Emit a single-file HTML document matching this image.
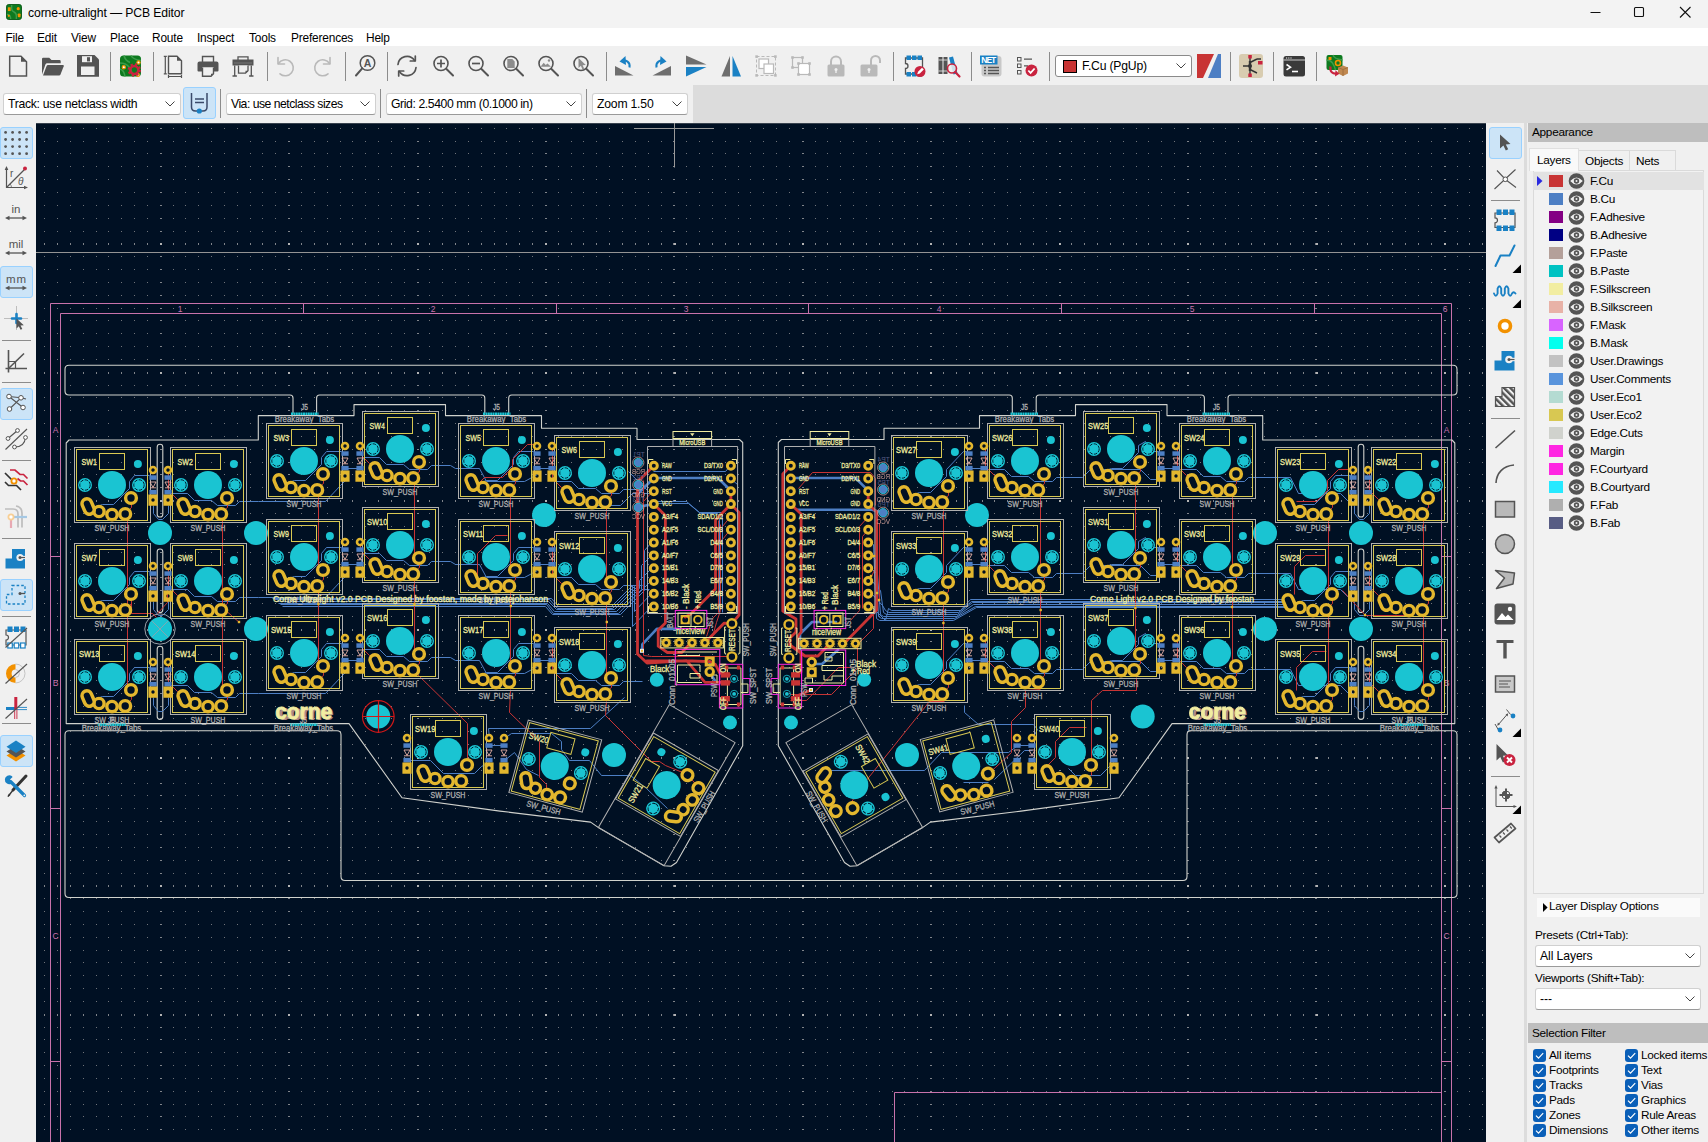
<!DOCTYPE html>
<html lang="en"><head><meta charset="utf-8"><title>corne-ultralight — PCB Editor</title>
<style>
*{box-sizing:border-box;margin:0;padding:0}
html,body{width:1708px;height:1142px;overflow:hidden;background:#f0f0f0;font-family:"Liberation Sans",sans-serif;font-size:12px;color:#000}
.abs{position:absolute}
#title{position:absolute;left:0;top:0;width:1708px;height:28px;background:#f3f3f3}
#title .t{position:absolute;left:28px;top:6px;font-size:12.2px;letter-spacing:-0.12px;white-space:nowrap}
#menu{position:absolute;left:0;top:28px;width:1708px;height:18px;background:#fff}
#menu span{position:absolute;top:3px;font-size:11.9px;white-space:nowrap;letter-spacing:-0.18px}
#tb1{position:absolute;left:0;top:46px;width:1708px;height:39px;background:#f0f0f0}
#tb2{position:absolute;left:0;top:85px;width:1708px;height:38px;background:#dcdcdc}
#tb2 .l{position:absolute;left:0;top:0;width:693px;height:38px;background:#f0f0f0}
.sep{position:absolute;width:1px;background:#8c8c8c}
.ic{position:absolute;width:24px;height:24px;overflow:visible}
.combo{position:absolute;height:22px;background:#fff;border:1px solid #d0d0d0;border-bottom-color:#9a9a9a;border-radius:3px;font-size:12.2px;line-height:20px;padding-left:4px;white-space:nowrap;letter-spacing:-0.1px}
.combo svg{position:absolute;right:5px;top:7px}
#ltb{position:absolute;left:0;top:123px;width:36px;height:1019px;background:#f0f0f0}
#rtb{position:absolute;left:1486px;top:123px;width:41px;height:1019px;background:#f0f0f0}
.hsep{position:absolute;height:1px;background:#8c8c8c}
.hl{position:absolute;background:#cce4f7;border:1px solid #99d1ff;border-radius:3px}
#panel{position:absolute;left:1527px;top:123px;width:181px;height:1019px;background:#f0f0f0;font-size:11.8px;letter-spacing:-0.28px}
.phead{position:absolute;left:1px;width:180px;background:#bebebe;padding-left:4px;white-space:nowrap}
.lrow{position:absolute;left:6px;width:171px;height:18px}
.lrow .sw{position:absolute;left:16px;top:3px;width:14px;height:12px}
.lrow .nm{position:absolute;left:57px;top:2px;white-space:nowrap}
.lrow svg{position:absolute;left:35px;top:1px}
.cb{position:absolute;width:13px;height:13px;background:#0a5fb8;border-radius:3px}
.cbt{position:absolute;white-space:nowrap}
#cv{position:absolute;left:36px;top:123px;width:1450px;height:1019px;background:#001023}
</style></head><body>
<div id="title">
<svg class="abs" style="left:6px;top:4px" width="16" height="16" viewBox="0 0 17 17"><rect x=".5" y=".5" width="16" height="16" rx="2.5" fill="#0d7a1f" stroke="#0a5a16"/><path d="M6 1 v4 q0 2.5 2.5 3.5 t2.5 4 v3.5 M1 11 q4 0 4 5" fill="none" stroke="#3c9b4a" stroke-width="1.5"/><rect x="2" y="3.5" width="3" height="4" fill="#f29100"/><circle cx="13" cy="5" r="1.7" fill="#f29100"/><rect x="12.5" y="10" width="3" height="4" rx="1" fill="#f29100"/><circle cx="3" cy="12.5" r="1.2" fill="#f29100"/></svg>
<div class="t">corne-ultralight — PCB Editor</div>
<svg class="abs" style="left:1580px;top:0" width="128" height="27" viewBox="0 0 128 27"><path d="M10.5 12.5 h10" stroke="#111" stroke-width="1"/><rect x="54.5" y="7.5" width="9" height="9" rx="1" fill="none" stroke="#111" stroke-width="1.1"/><path d="M100 7 l10.5 10.5 M110.5 7 l-10.5 10.5" stroke="#111" stroke-width="1.1"/></svg>
</div>
<div id="menu">
<span style="left:5.5px">File</span>
<span style="left:37px">Edit</span>
<span style="left:71px">View</span>
<span style="left:110px">Place</span>
<span style="left:152px">Route</span>
<span style="left:197px">Inspect</span>
<span style="left:249px">Tools</span>
<span style="left:291px">Preferences</span>
<span style="left:366px">Help</span>
</div>
<div id="tb1">
<svg class="ic" style="left:6px;top:8px;width:24px;height:24px" viewBox="0 0 24 24"><path d="M3.7 2.2 h11.3 l5.5 5.5 v14.2 h-16.8z" fill="none" stroke="#545454" stroke-width="1.5"/><path d="M15 2.2 v5.5 h5.5z" fill="#545454"/></svg>
<svg class="ic" style="left:40px;top:8px;width:24px;height:24px" viewBox="0 0 24 24"><path d="M2 20.5 V5 q0-1.2 1.2-1.2 h6 l2.3 2.3 h8 q1.2 0 1.2 1.2 v2 H7.2 q-1.3 0-1.8 1.2z" fill="#545454"/><path d="M3 21.5 l3.6-9.4 q.4-1 1.4-1 h15 q1.1 0 .7 1.1 l-3.2 8.3 q-.4 1-1.5 1z" fill="#545454"/></svg>
<svg class="ic" style="left:76px;top:8px;width:24px;height:24px" viewBox="0 0 24 24"><path d="M1 1 h17.5 l4.5 4.5 v17.3 h-22z" fill="#545454"/><rect x="5" y="12.5" width="13.5" height="8.5" fill="#f0f0f0"/><rect x="6" y="2.2" width="10" height="6" fill="#f0f0f0"/><rect x="11" y="3.2" width="3" height="4.2" fill="#545454"/></svg>
<div class="sep" style="left:110px;top:6px;height:29px"></div>
<svg class="ic" style="left:118px;top:8px;width:24px;height:24px" viewBox="0 0 24 24"><rect x="2" y="1.5" width="21" height="21" rx="3.5" fill="#0d7a1f"/><path d="M2 9 q6 0 9 4 t4 9.5 M6 1.5 q1 5 6 7 M13 1.5 q2 4 10 5 M2 15 q4 1 5 7.5" fill="none" stroke="#3c9b4a" stroke-width="1.6"/><circle cx="5.8" cy="13.2" r="1.6" fill="#fff" stroke="#f29100" stroke-width="1.2"/><circle cx="20.5" cy="8.5" r="1.6" fill="#fff" stroke="#f29100" stroke-width="1.2"/><circle cx="20" cy="21" r="1.4" fill="#fff" stroke="#f29100" stroke-width="1.2"/><circle cx="16.3" cy="16" r="4" fill="none" stroke="#c9233f" stroke-width="2.6"/><circle cx="16.3" cy="16" r="5.6" fill="none" stroke="#c9233f" stroke-width="2.2" stroke-dasharray="2.2 2.2"/></svg>
<div class="sep" style="left:153px;top:6px;height:29px"></div>
<svg class="ic" style="left:161px;top:8px;width:24px;height:24px" viewBox="0 0 24 24"><path d="M7.5 2.3 h8.5 l4.5 4.5 v13 h-13z" fill="none" stroke="#545454" stroke-width="1.4"/><path d="M16 2.3 v4.5 h4.5z" fill="#545454"/><path d="M4.3 2.3 v17.5 M2.8 2.3 h3 M2.8 19.8 h3 M7.5 22.5 h13 M7.5 21 v3 M20.5 21 v3" stroke="#545454" stroke-width="1.2" fill="none"/></svg>
<svg class="ic" style="left:196px;top:8px;width:24px;height:24px" viewBox="0 0 24 24"><path d="M6.5 8 V2.5 h11 V8" fill="none" stroke="#545454" stroke-width="1.4"/><path d="M1.5 9.5 q0-2 2-2 h17 q2 0 2 2 v7 q0 1-1 1 h-3.5 v-4 h-12 v4 h-3.5 q-1 0-1-1z" fill="#545454"/><path d="M6.5 13.5 v8.7 h8.5 l2.5-2.5 v-6.2" fill="#f0f0f0" stroke="#545454" stroke-width="1.4"/><path d="M15 22.2 v-2.5 h2.5z" fill="#545454"/></svg>
<svg class="ic" style="left:231px;top:8px;width:24px;height:24px" viewBox="0 0 24 24"><path d="M7 6 V2.8 h10 V6" fill="none" stroke="#545454" stroke-width="1.3"/><path d="M1.5 5.5 h21 v6 h-21z" fill="#545454"/><path d="M3 9 h18" stroke="#777" stroke-width="1"/><path d="M7.5 11.5 v7.7 h7 l2.5-2.5 v-5.2" fill="#f0f0f0" stroke="#545454" stroke-width="1.3"/><path d="M14.5 19.2 v-2.5 h2.5z" fill="#545454"/><path d="M3.7 11.5 v10.5 M20.3 11.5 v10.5 M1.5 22 h4.4 M18.1 22 h4.4" stroke="#545454" stroke-width="1.3"/></svg>
<div class="sep" style="left:266.5px;top:6px;height:29px"></div>
<svg class="ic" style="left:274px;top:8px;width:24px;height:24px" viewBox="0 0 24 24"><path d="M4.5 9.5 A8 8 0 1 1 6 19.8" fill="none" stroke="#b9b9b9" stroke-width="1.6" stroke-linecap="round"/><path d="M4 3.5 V10 h6.5" fill="none" stroke="#b9b9b9" stroke-width="1.6" stroke-linecap="round" stroke-linejoin="round"/></svg>
<svg class="ic" style="left:310px;top:8px;width:24px;height:24px" viewBox="0 0 24 24"><path d="M19.5 9.5 A8 8 0 1 0 18 19.8" fill="none" stroke="#b9b9b9" stroke-width="1.6" stroke-linecap="round"/><path d="M20 3.5 V10 h-6.5" fill="none" stroke="#b9b9b9" stroke-width="1.6" stroke-linecap="round" stroke-linejoin="round"/></svg>
<div class="sep" style="left:345px;top:6px;height:29px"></div>
<svg class="ic" style="left:354px;top:8px;width:24px;height:24px" viewBox="0 0 24 24"><circle cx="13.5" cy="9" r="7.3" fill="none" stroke="#545454" stroke-width="1.5"/><path d="M8.2 14.3 L2 21.5" stroke="#545454" stroke-width="2" stroke-linecap="round"/><text x="13.5" y="12.8" font-family="Liberation Sans,sans-serif" font-weight="bold" font-size="10.5" text-anchor="middle" fill="#545454">A</text></svg>
<div class="sep" style="left:387px;top:6px;height:29px"></div>
<svg class="ic" style="left:395px;top:8px;width:24px;height:24px" viewBox="0 0 24 24"><path d="M3 10.5 A9 9 0 0 1 19.5 6.5 M21 13.5 A9 9 0 0 1 4.5 17.5" fill="none" stroke="#545454" stroke-width="1.7" stroke-linecap="round"/><path d="M20.3 2 v5 h-5 M3.7 22 v-5 h5" fill="none" stroke="#545454" stroke-width="1.7" stroke-linecap="round" stroke-linejoin="round"/></svg>
<svg class="ic" style="left:431px;top:8px;width:24px;height:24px" viewBox="0 0 24 24"><circle cx="10" cy="9.5" r="7" fill="none" stroke="#545454" stroke-width="1.6"/><path d="M15.2 14.8 L22 21.5" stroke="#545454" stroke-width="2" stroke-linecap="round"/><path d="M6 9.5 h8 M10 5.5 v8" stroke="#545454" stroke-width="1.7"/></svg>
<svg class="ic" style="left:466px;top:8px;width:24px;height:24px" viewBox="0 0 24 24"><circle cx="10" cy="9.5" r="7" fill="none" stroke="#545454" stroke-width="1.6"/><path d="M15.2 14.8 L22 21.5" stroke="#545454" stroke-width="2" stroke-linecap="round"/><path d="M6 9.5 h8" stroke="#545454" stroke-width="1.7"/></svg>
<svg class="ic" style="left:501px;top:8px;width:24px;height:24px" viewBox="0 0 24 24"><circle cx="10" cy="9.5" r="7" fill="none" stroke="#545454" stroke-width="1.6"/><path d="M15.2 14.8 L22 21.5" stroke="#545454" stroke-width="2" stroke-linecap="round"/><path d="M6.3 5 h5 l2.4 2.4 v6.6 h-7.4z" fill="#8c8c8c"/></svg>
<svg class="ic" style="left:536px;top:8px;width:24px;height:24px" viewBox="0 0 24 24"><circle cx="10" cy="9.5" r="7" fill="none" stroke="#545454" stroke-width="1.6"/><path d="M15.2 14.8 L22 21.5" stroke="#545454" stroke-width="2" stroke-linecap="round"/><path d="M4.5 12.8 l3.2-4 2 2.2 1.8-1.5 3.5 3.3z" fill="#8c8c8c"/><circle cx="13" cy="6.5" r="1.2" fill="#8c8c8c"/></svg>
<svg class="ic" style="left:571px;top:8px;width:24px;height:24px" viewBox="0 0 24 24"><circle cx="10" cy="9.5" r="7" fill="none" stroke="#545454" stroke-width="1.6"/><path d="M15.2 14.8 L22 21.5" stroke="#545454" stroke-width="2" stroke-linecap="round"/><path d="M7.5 4 v10 l2.4-2.2 1.6 3.6 1.7-.8 -1.6-3.4 3.2-.3z" fill="#8c8c8c"/></svg>
<div class="sep" style="left:606px;top:6px;height:29px"></div>
<svg class="ic" style="left:613px;top:8px;width:24px;height:24px" viewBox="0 0 24 24"><path d="M2 21.5 V12 L20.5 21.5z" fill="#6e6e6e"/><path d="M16.5 13.5 C17.5 8 13 5.5 8.5 7" fill="none" stroke="#1a81c4" stroke-width="2"/><path d="M12.5 2 L6.5 7.6 L13 11z" fill="#1a81c4"/></svg>
<svg class="ic" style="left:649px;top:8px;width:24px;height:24px" viewBox="0 0 24 24"><path d="M22 21.5 V12 L3.5 21.5z" fill="#6e6e6e"/><path d="M7.5 13.5 C6.5 8 11 5.5 15.5 7" fill="none" stroke="#1a81c4" stroke-width="2"/><path d="M11.5 2 L17.5 7.6 L11 11z" fill="#1a81c4"/></svg>
<svg class="ic" style="left:684px;top:8px;width:24px;height:24px" viewBox="0 0 24 24"><path d="M2 1.5 V10.5 L22.5 10.5z" fill="#6e6e6e"/><path d="M2 22.5 V13 L22.5 13z" fill="#1a81c4"/></svg>
<svg class="ic" style="left:719px;top:8px;width:24px;height:24px" viewBox="0 0 24 24"><path d="M11 2 V22.5 H2.5z" fill="#6e6e6e"/><path d="M13.5 2 V22.5 H22z" fill="#1a81c4"/></svg>
<svg class="ic" style="left:754px;top:8px;width:24px;height:24px" viewBox="0 0 24 24"><rect x="2.5" y="2.5" width="19" height="19" fill="none" stroke="#b9b9b9" stroke-width="1" stroke-dasharray="3 2"/><rect x="1.3" y="1.3" width="2.6" height="2.6" fill="#b9b9b9"/><rect x="20.1" y="1.3" width="2.6" height="2.6" fill="#b9b9b9"/><rect x="1.3" y="20.1" width="2.6" height="2.6" fill="#b9b9b9"/><rect x="20.1" y="20.1" width="2.6" height="2.6" fill="#b9b9b9"/><rect x="5" y="5" width="9.5" height="9.5" fill="#fff" stroke="#b9b9b9" stroke-width="1.2"/><rect x="10" y="10" width="9.5" height="9.5" fill="#fff" stroke="#b9b9b9" stroke-width="1.2"/></svg>
<svg class="ic" style="left:789px;top:8px;width:24px;height:24px" viewBox="0 0 24 24"><rect x="3.5" y="3.5" width="10" height="10" fill="#f0f0f0" stroke="#b9b9b9" stroke-width="1.2"/><rect x="9.5" y="9.5" width="11" height="11" fill="#fff" stroke="#b9b9b9" stroke-width="1.2"/><rect x="2.2" y="2.2" width="2.6" height="2.6" fill="#b9b9b9"/><rect x="12.2" y="2.2" width="2.6" height="2.6" fill="#b9b9b9"/><rect x="2.2" y="12.2" width="2.6" height="2.6" fill="#b9b9b9"/><rect x="8.2" y="8.2" width="2.6" height="2.6" fill="#b9b9b9"/><rect x="19.2" y="8.2" width="2.6" height="2.6" fill="#b9b9b9"/><rect x="8.2" y="19.2" width="2.6" height="2.6" fill="#b9b9b9"/><rect x="19.2" y="19.2" width="2.6" height="2.6" fill="#b9b9b9"/></svg>
<svg class="ic" style="left:824px;top:8px;width:24px;height:24px" viewBox="0 0 24 24"><path d="M7 11 V7.5 a5 5 0 0 1 10 0 V11" fill="none" stroke="#b9b9b9" stroke-width="2"/><rect x="3.5" y="10.5" width="17" height="12" rx="1.5" fill="#b9b9b9"/><circle cx="12" cy="15.5" r="1.5" fill="#f0f0f0"/><rect x="11.3" y="15.5" width="1.4" height="3.5" fill="#f0f0f0"/></svg>
<svg class="ic" style="left:859px;top:8px;width:24px;height:24px" viewBox="0 0 24 24"><path d="M12 11 V6.5 a4.5 4.5 0 0 1 9 0 V9" fill="none" stroke="#b9b9b9" stroke-width="2"/><rect x="1.5" y="10.5" width="17" height="12" rx="1.5" fill="#b9b9b9"/><circle cx="10" cy="15.5" r="1.5" fill="#f0f0f0"/><rect x="9.3" y="15.5" width="1.4" height="3.5" fill="#f0f0f0"/></svg>
<div class="sep" style="left:893px;top:6px;height:29px"></div>
<svg class="ic" style="left:902px;top:8px;width:24px;height:24px" viewBox="0 0 24 24"><path d="M3.5 4 h17 v16 h-17 v-5.5 a2.3 2.3 0 0 0 0-5z" fill="#f0f0f0" stroke="#545454" stroke-width="1.3"/><rect x="4.5" y="1.5" width="4.5" height="4.5" fill="#1a81c4"/><rect x="4.5" y="18" width="4.5" height="4.5" fill="#1a81c4"/><rect x="10" y="1.5" width="4.5" height="4.5" fill="#1a81c4"/><rect x="10" y="18" width="4.5" height="4.5" fill="#1a81c4"/><rect x="15.5" y="1.5" width="4.5" height="4.5" fill="#1a81c4"/><rect x="15.5" y="18" width="4.5" height="4.5" fill="#1a81c4"/><circle cx="18" cy="17.5" r="5.5" fill="#c9233f"/><path d="M15.2 20.3 l.8-2.6 4-4 1.8 1.8 -4 4z" fill="#fff"/></svg>
<svg class="ic" style="left:937px;top:8px;width:24px;height:24px" viewBox="0 0 24 24"><rect x="1.5" y="3" width="4" height="17" fill="#545454"/><rect x="6.5" y="3" width="4" height="17" fill="#545454"/><path d="M12 3.5 l4-1 4.5 17 -4 1z" fill="#1a81c4"/><path d="M1.5 6 h9 M1.5 17 h9" stroke="#f0f0f0" stroke-width=".8"/><circle cx="15" cy="14.5" r="4.5" fill="#f0f0f0" fill-opacity=".85" stroke="#c9233f" stroke-width="1.6"/><path d="M18.2 18 L22.5 22.5" stroke="#c9233f" stroke-width="2.2" stroke-linecap="round"/></svg>
<div class="sep" style="left:971px;top:6px;height:29px"></div>
<svg class="ic" style="left:979px;top:8px;width:24px;height:24px" viewBox="0 0 24 24"><rect x="2.5" y="2" width="20" height="20.5" rx="3" fill="#c8c8c8"/><rect x="1" y="1.5" width="17.5" height="9" fill="#1a81c4"/><text x="9.8" y="9.3" font-family="Liberation Sans,sans-serif" font-size="8.5" font-weight="bold" text-anchor="middle" fill="#fff" textLength="15">NET</text><path d="M9 13.5 h11 M9 16.5 h11 M9 19.5 h11" stroke="#545454" stroke-width="1.5"/><path d="M5 13.5 h2 M5 16.5 h2 M5 19.5 h2" stroke="#545454" stroke-width="1.5"/></svg>
<svg class="ic" style="left:1015px;top:8px;width:24px;height:24px" viewBox="0 0 24 24"><rect x="2.5" y="3.5" width="3.5" height="3.5" fill="none" stroke="#545454" stroke-width="1"/><rect x="2.5" y="10" width="3.5" height="3.5" fill="none" stroke="#545454" stroke-width="1"/><rect x="2.5" y="16.5" width="3.5" height="3.5" fill="none" stroke="#545454" stroke-width="1"/><path d="M9 5.2 h8 M9 11.8 h4" stroke="#545454" stroke-width="1.3"/><circle cx="16.5" cy="16.5" r="6" fill="#c9233f"/><path d="M13.3 16.5 l2.3 2.4 4-4.4" fill="none" stroke="#fff" stroke-width="1.8"/></svg>
<div class="sep" style="left:1049px;top:6px;height:29px"></div>
<svg class="ic" style="left:1197px;top:8px;width:24px;height:24px" viewBox="0 0 24 24"><path d="M0 0 H17 L6 24 H0z" fill="#c83434"/><path d="M24 0 V24 H11 L21 0z" fill="#4d7fc4"/></svg>
<div class="sep" style="left:1230px;top:6px;height:29px"></div>
<svg class="ic" style="left:1239px;top:8px;width:24px;height:24px" viewBox="0 0 24 24"><rect x="0" y="0" width="24" height="24" rx="3" fill="#d8ccb0"/><path d="M11 2 V8.5 M11 15.5 V22 M4 12 h7 M11 8.5 L18 5 M11 15.5 L18 19 M18 5 h4" stroke="#333" stroke-width="1.4" fill="none"/><circle cx="11" cy="12" r="2" fill="#333"/><path d="M11 7 v10" stroke="#333" stroke-width="2.4"/><rect x="9.3" y="1" width="3.5" height="3.5" fill="#c9233f"/><rect x="19" y="7" width="4.5" height="3.5" fill="#c9233f"/><rect x="9.3" y="19.5" width="3.5" height="3.5" fill="#c9233f"/></svg>
<div class="sep" style="left:1273px;top:6px;height:29px"></div>
<svg class="ic" style="left:1282px;top:8px;width:24px;height:24px" viewBox="0 0 24 24"><rect x="1.5" y="2" width="21.5" height="20.5" rx="2.5" fill="#3a3a3a"/><path d="M1.5 6 h21.5" stroke="#f0f0f0" stroke-width=".8"/><path d="M4 4 h1.2 M6.2 4 h1.2 M8.4 4 h1.2" stroke="#f0f0f0" stroke-width="1"/><path d="M4.5 10.5 l4 2.7 -4 2.7" fill="none" stroke="#fff" stroke-width="1.6"/><path d="M10 17.5 h6" stroke="#fff" stroke-width="1.6"/></svg>
<div class="sep" style="left:1316px;top:6px;height:29px"></div>
<svg class="ic" style="left:1325px;top:8px;width:24px;height:24px" viewBox="0 0 24 24"><rect x="1.5" y="1" width="16" height="15" rx="2" fill="#0d7a1f"/><path d="M1.5 6 q4 0 6 3 t3 7 M8 1 q1 4 9.5 5" fill="none" stroke="#3c9b4a" stroke-width="1.4"/><rect x="3.5" y="3" width="3" height="3" fill="#f29100"/><circle cx="13" cy="9" r="2.5" fill="none" stroke="#f29100" stroke-width="1.6"/><path d="M13 13.5 l5-2 5 2 v6 l-5 2.5 -5-2.5z" fill="#c08850"/><path d="M13 13.5 l5 2 5-2 M18 15.5 v6.5" stroke="#9a6a3a" stroke-width=".8" fill="none"/><path d="M5.5 12.5 C4.5 18 8 20 11.5 19.5" fill="none" stroke="#c9233f" stroke-width="2.2"/><path d="M10.5 16.3 l4 3.5 -4.5 2.7z" fill="#c9233f"/></svg>
<div class="combo" style="left:1055px;top:9px;width:137px;padding-left:26px;border-color:#8a8a8a;letter-spacing:-.2px">F.Cu (PgUp)<div class="abs" style="left:7px;top:4px;width:14px;height:13px;background:#c83434;border:1px solid #000"></div><svg width="10" height="6" viewBox="0 0 10 6"><path d="M.5 .5 L5 5 L9.5 .5" fill="none" stroke="#444" stroke-width="1"/></svg></div>
</div>
<div id="tb2"><div class="l"></div>
<div class="combo" style="left:3px;top:8px;width:178px;letter-spacing:-.28px">Track: use netclass width<svg width="10" height="6" viewBox="0 0 10 6"><path d="M.5 .5 L5 5 L9.5 .5" fill="none" stroke="#444" stroke-width="1"/></svg></div>
<div class="hl" style="left:183px;top:2px;width:33px;height:32px"></div>
<svg class="ic" style="left:187px;top:5px;width:24px;height:24px" viewBox="0 0 24 24"><path d="M4.5 3 V17 q0 4 4 4 h7.5 q4 0 4-4 V3" fill="none" stroke="#3a4a6a" stroke-width="1.5"/><path d="M8 9 h9 M8 12.5 h9" stroke="#3a4a6a" stroke-width="1.3"/><circle cx="12.3" cy="21" r="2.6" fill="#1a81c4"/></svg>
<div class="sep" style="left:220px;top:4px;height:29px"></div>
<div class="combo" style="left:226px;top:8px;width:150px;letter-spacing:-.5px">Via: use netclass sizes<svg width="10" height="6" viewBox="0 0 10 6"><path d="M.5 .5 L5 5 L9.5 .5" fill="none" stroke="#444" stroke-width="1"/></svg></div>
<div class="sep" style="left:380px;top:4px;height:29px"></div>
<div class="combo" style="left:386px;top:8px;width:196px;letter-spacing:-.4px">Grid: 2.5400 mm (0.1000 in)<svg width="10" height="6" viewBox="0 0 10 6"><path d="M.5 .5 L5 5 L9.5 .5" fill="none" stroke="#444" stroke-width="1"/></svg></div>
<div class="sep" style="left:586px;top:4px;height:29px"></div>
<div class="combo" style="left:592px;top:8px;width:96px;letter-spacing:-.2px">Zoom 1.50<svg width="10" height="6" viewBox="0 0 10 6"><path d="M.5 .5 L5 5 L9.5 .5" fill="none" stroke="#444" stroke-width="1"/></svg></div>
</div>
<div id="ltb">
<div class="hl" style="left:0px;top:4px;width:33px;height:32px"></div>
<div class="hl" style="left:0px;top:143px;width:33px;height:32px"></div>
<div class="hl" style="left:0px;top:265px;width:33px;height:32px"></div>
<div class="hl" style="left:0px;top:456px;width:33px;height:32px"></div>
<div class="hl" style="left:0px;top:612px;width:33px;height:32px"></div>
<div class="hsep" style="left:2px;top:217px;width:29px"></div>
<div class="hsep" style="left:2px;top:259px;width:29px"></div>
<div class="hsep" style="left:2px;top:337px;width:29px"></div>
<div class="hsep" style="left:2px;top:415px;width:29px"></div>
<div class="hsep" style="left:2px;top:493px;width:29px"></div>
<div class="hsep" style="left:2px;top:600px;width:29px"></div>
<svg class="ic" style="left:4px;top:8px;width:24px;height:24px" viewBox="0 0 24 24"><circle cx="1.6" cy="1.4" r="1.4" fill="#545454"/><circle cx="1.6" cy="8.5" r="1.4" fill="#545454"/><circle cx="1.6" cy="15.6" r="1.4" fill="#545454"/><circle cx="1.6" cy="22.699999999999996" r="1.4" fill="#545454"/><circle cx="8.6" cy="1.4" r="1.4" fill="#545454"/><circle cx="8.6" cy="8.5" r="1.4" fill="#545454"/><circle cx="8.6" cy="15.6" r="1.4" fill="#545454"/><circle cx="8.6" cy="22.699999999999996" r="1.4" fill="#545454"/><circle cx="15.6" cy="1.4" r="1.4" fill="#545454"/><circle cx="15.6" cy="8.5" r="1.4" fill="#545454"/><circle cx="15.6" cy="15.6" r="1.4" fill="#545454"/><circle cx="15.6" cy="22.699999999999996" r="1.4" fill="#545454"/><circle cx="22.6" cy="1.4" r="1.4" fill="#545454"/><circle cx="22.6" cy="8.5" r="1.4" fill="#545454"/><circle cx="22.6" cy="15.6" r="1.4" fill="#545454"/><circle cx="22.6" cy="22.699999999999996" r="1.4" fill="#545454"/></svg>
<svg class="ic" style="left:4px;top:43px;width:24px;height:24px" viewBox="0 0 24 24"><path d="M2.5 1.5 V21.5 H22.5" fill="none" stroke="#545454" stroke-width="1.2"/><path d="M2.5 0 l-1.8 4 h3.6z M24 21.5 l-4-1.8 v3.6z" fill="#545454"/><path d="M2.5 21.5 L20.5 3.5" stroke="#545454" stroke-width="1.2"/><circle cx="21" cy="2.5" r="2" fill="#c9233f"/><text x="6" y="11" font-family="Liberation Sans,sans-serif" font-size="10" fill="#545454">r</text><text x="14" y="18.5" font-family="Liberation Sans,sans-serif" font-size="10" font-style="italic" fill="#545454">θ</text><path d="M7.5 21.5 a5 5 0 0 0 -1.5-3.5" fill="none" stroke="#545454" stroke-width=".7"/></svg>
<svg class="ic" style="left:4px;top:77px;width:24px;height:24px" viewBox="0 0 24 24"><text x="12" y="12.5" font-family="Liberation Sans,sans-serif" font-size="11.5" text-anchor="middle" fill="#545454">in</text><path d="M3 18 h18" stroke="#545454" stroke-width="1.3"/><path d="M1 18 l4.5-2.3 v4.6z M23 18 l-4.5-2.3 v4.6z" fill="#545454"/></svg>
<svg class="ic" style="left:4px;top:112px;width:24px;height:24px" viewBox="0 0 24 24"><text x="12" y="12.5" font-family="Liberation Sans,sans-serif" font-size="11.5" text-anchor="middle" fill="#545454">mil</text><path d="M3 18 h18" stroke="#545454" stroke-width="1.3"/><path d="M1 18 l4.5-2.3 v4.6z M23 18 l-4.5-2.3 v4.6z" fill="#545454"/></svg>
<svg class="ic" style="left:4px;top:147px;width:24px;height:24px" viewBox="0 0 24 24"><text x="12" y="12.5" font-family="Liberation Sans,sans-serif" font-size="11.5" text-anchor="middle" fill="#545454" textLength="20">mm</text><path d="M3 18 h18" stroke="#545454" stroke-width="1.3"/><path d="M1 18 l4.5-2.3 v4.6z M23 18 l-4.5-2.3 v4.6z" fill="#545454"/></svg>
<svg class="ic" style="left:4px;top:183px;width:24px;height:24px" viewBox="0 0 24 24"><path d="M12.5 0 V24 M0 12.5 H24" stroke="#9a9a9a" stroke-width=".600"/><path d="M8 12.5 h9 M12.5 8 v9" stroke="#1a81c4" stroke-width="2.6" stroke-linecap="round"/><path d="M12.5 12.5 v10 l2.3-2.3 1.8 3.6 1.7-.800 -1.8-3.5 3.3-.200z" fill="#545454"/></svg>
<svg class="ic" style="left:4px;top:226px;width:24px;height:24px" viewBox="0 0 24 24"><path d="M4.5 1 V23.5 M1.5 19.5 H23" stroke="#545454" stroke-width="1.6"/><path d="M4.5 19.5 L20 4.5" stroke="#545454" stroke-width="1.6"/><path d="M4.5 12.5 h7 v7" fill="none" stroke="#545454" stroke-width="1.2"/></svg>
<svg class="ic" style="left:4px;top:269px;width:24px;height:24px" viewBox="0 0 24 24"><path d="M5 4.5 L17 5.8 L22 7 M5 4.5 L19 15.5 M17 5.8 L5.5 17" stroke="#545454" stroke-width="1.1" fill="none"/><circle cx="5" cy="4.5" r="2.3" fill="#fff" stroke="#545454" stroke-width="1"/><circle cx="17" cy="5.8" r="2.3" fill="#fff" stroke="#545454" stroke-width="1"/><circle cx="19" cy="15.5" r="2.3" fill="#fff" stroke="#545454" stroke-width="1"/><circle cx="5.5" cy="17" r="2.3" fill="#fff" stroke="#545454" stroke-width="1"/></svg>
<svg class="ic" style="left:4px;top:304px;width:24px;height:24px" viewBox="0 0 24 24"><path d="M1.5 22.5 L23 2" stroke="#545454" stroke-width="1.1"/><path d="M4 11.5 L13.5 3.5" stroke="#545454" stroke-width="1.1"/><path d="M10.5 20 C18 20 21 16 21.5 10.5" stroke="#545454" stroke-width="1.1" fill="none"/><circle cx="4" cy="11.5" r="1.9" fill="#fff" stroke="#545454" stroke-width="1"/><circle cx="13.5" cy="3.5" r="1.9" fill="#fff" stroke="#545454" stroke-width="1"/><circle cx="10.5" cy="20" r="1.9" fill="#fff" stroke="#545454" stroke-width="1"/><circle cx="21.5" cy="10.5" r="1.9" fill="#fff" stroke="#545454" stroke-width="1"/></svg>
<svg class="ic" style="left:4px;top:346px;width:24px;height:24px" viewBox="0 0 24 24"><path d="M6 1 h5 l5 4.5 h3.5 l4 4 M13.5 9.5 l3 2.5 h3 l4 4" fill="none" stroke="#c9233f" stroke-width="1.7"/><path d="M1 4 l7 7 M1 13 l3.5 3.5 h8 l4.5 4.5" fill="none" stroke="#333" stroke-width="1.7"/><circle cx="10" cy="12" r="2.6" fill="#fff" stroke="#f29100" stroke-width="1.8"/></svg>
<svg class="ic" style="left:4px;top:382px;width:24px;height:24px" viewBox="0 0 24 24"><path d="M1 4 h8 q5 0 5 5 v13.5 M12 1 q6 1 6 7 v14.5" fill="none" stroke="#bdbdbd" stroke-width="1.7"/><path d="M7 12 h16" stroke="#a5c8e4" stroke-width="2.2"/><path d="M7 14 v9" stroke="#e8a9b3" stroke-width="2.2"/><circle cx="7" cy="12" r="2.6" fill="#fff" stroke="#f8cf95" stroke-width="1.8"/></svg>
<svg class="ic" style="left:4px;top:424px;width:24px;height:24px" viewBox="0 0 24 24"><path d="M8 2 h13 v19.5 h-19.5 v-10 h6.5z" fill="#1a81c4"/><circle cx="16" cy="10.5" r="3.6" fill="#f0f0f0"/><path d="M16 10.5 h5" stroke="#f0f0f0" stroke-width="3.2"/><circle cx="16" cy="10.5" r="1.5" fill="#545454"/><path d="M16 10.5 h5" stroke="#545454" stroke-width="1.2"/></svg>
<svg class="ic" style="left:4px;top:460px;width:24px;height:24px" viewBox="0 0 24 24"><path d="M8 2.5 h13 v18.5 h-18.5 v-9.5 h5.5z" fill="none" stroke="#1a81c4" stroke-width="1.3" stroke-dasharray="2.6 2"/><circle cx="16" cy="10.5" r="1.5" fill="#545454"/><path d="M16 10.5 h5" stroke="#545454" stroke-width="1.3"/></svg>
<svg class="ic" style="left:4px;top:502px;width:24px;height:24px" viewBox="0 0 24 24"><path d="M2 5 h20 v15 h-20 v-5 a2.5 2.5 0 0 0 0-5z" fill="none" stroke="#545454" stroke-width="1.2"/><rect x="3.5" y="1.5" width="5" height="5.5" fill="#1a81c4"/><rect x="10" y="1.5" width="5" height="5.5" fill="#1a81c4"/><rect x="16.5" y="1.5" width="5" height="5.5" fill="#1a81c4"/><rect x="3.8" y="18" width="4.5" height="5" fill="#fff" stroke="#1a81c4" stroke-width="1.2"/><rect x="10.2" y="18" width="4.5" height="5" fill="#fff" stroke="#1a81c4" stroke-width="1.2"/><rect x="16.6" y="18" width="4.5" height="5" fill="#fff" stroke="#1a81c4" stroke-width="1.2"/><path d="M1.5 22.5 L23 3" stroke="#545454" stroke-width="1.1"/></svg>
<svg class="ic" style="left:4px;top:538px;width:24px;height:24px" viewBox="0 0 24 24"><path d="M11.5 3 a9.5 9.5 0 0 0 0 19 v-5.6 a3.9 3.9 0 0 1 0-7.8z" fill="#f29100"/><path d="M11.5 3 a9.5 9.5 0 0 1 0 19 M11.5 8.6 a3.9 3.9 0 0 1 0 7.8" fill="none" stroke="#c4c4c4" stroke-width="1"/><path d="M1.5 22.5 L23 3" stroke="#545454" stroke-width="1.1"/></svg>
<svg class="ic" style="left:4px;top:573px;width:24px;height:24px" viewBox="0 0 24 24"><path d="M2 12.5 h11" stroke="#1a81c4" stroke-width="3"/><path d="M13 11.4 h10 M13 13.6 h10" stroke="#1a81c4" stroke-width=".900"/><path d="M11.8 1 v12" stroke="#c9233f" stroke-width="3"/><path d="M10.7 13 v10 M12.9 13 v10" stroke="#c9233f" stroke-width=".900"/><path d="M1.5 22.5 L23 3" stroke="#545454" stroke-width="1.1"/></svg>
<svg class="ic" style="left:4px;top:616px;width:24px;height:24px" viewBox="0 0 24 24"><path d="M12 10.5 l9.5 6 -9.5 6 -9.5-6z" fill="#f29100"/><path d="M12 6.5 l9.5 6 -9.5 6 -9.5-6z" fill="#545454"/><path d="M12 1.5 l9.5 6.2 -9.5 6.2 -9.5-6.2z" fill="#1a81c4"/></svg>
<svg class="ic" style="left:4px;top:651px;width:24px;height:24px" viewBox="0 0 24 24"><path d="M22 2 L9 16" stroke="#333" stroke-width="3" stroke-linecap="round"/><path d="M9.5 15.5 L4 22.5" stroke="#333" stroke-width="1.3"/><path d="M3.5 23 l1.5-3.5 1.5 1.5z" fill="#333"/><path d="M6.5 7.5 L20.5 21.5" stroke="#1a81c4" stroke-width="3.2" stroke-linecap="round"/><path d="M8.3 2.2 a4.5 4.5 0 1 0 -1.8 7.8 l1.5-1.5 -2-3 3-2z" fill="#1a81c4" transform="rotate(-8 6 6)"/><circle cx="20.3" cy="21.3" r=".900" fill="#f0f0f0"/></svg>
</div>
<div id="rtb">
<div class="hl" style="left:3px;top:4px;width:33px;height:32px"></div>
<div class="hsep" style="left:5px;top:76.5px;width:29px"></div>
<div class="hsep" style="left:5px;top:294.5px;width:29px"></div>
<div class="hsep" style="left:5px;top:653px;width:29px"></div>
<svg class="ic" style="left:7px;top:8px;width:24px;height:24px" viewBox="0 0 24 24"><path d="M7 3.5 v14 l3.4-3.1 2.4 5 2.4-1.1 -2.4-4.9 4.7-.300z" fill="#545454"/></svg>
<svg class="ic" style="left:7px;top:44px;width:24px;height:24px" viewBox="0 0 24 24"><path d="M1.5 22 L22.5 2.5 M4 3.5 L12.5 12.5 L23 20.5" fill="none" stroke="#545454" stroke-width="1.1"/><circle cx="12.3" cy="12.3" r="2.3" fill="#fff" stroke="#545454" stroke-width="1"/></svg>
<svg class="ic" style="left:7px;top:85px;width:24px;height:24px" viewBox="0 0 24 24"><path d="M2 5 h20 v14.5 h-20 v-4.7 a2.5 2.5 0 0 0 0-5z" fill="#f0f0f0" stroke="#545454" stroke-width="1.2"/><rect x="3.5" y="1.5" width="5" height="5.5" fill="#1a81c4"/><rect x="3.5" y="17.5" width="5" height="5.5" fill="#1a81c4"/><rect x="10" y="1.5" width="5" height="5.5" fill="#1a81c4"/><rect x="10" y="17.5" width="5" height="5.5" fill="#1a81c4"/><rect x="16.5" y="1.5" width="5" height="5.5" fill="#1a81c4"/><rect x="16.5" y="17.5" width="5" height="5.5" fill="#1a81c4"/></svg>
<svg class="ic" style="left:7px;top:121px;width:24px;height:24px" viewBox="0 0 24 24"><path d="M2.5 22 L7.5 11.5 H16.5 L21.5 1.5" fill="none" stroke="#1a81c4" stroke-width="2" stroke-linecap="round" stroke-linejoin="round"/><path d="M28 20.5 V29 H19.5z" fill="#000"/></svg>
<svg class="ic" style="left:7px;top:156px;width:24px;height:24px" viewBox="0 0 24 24"><path d="M1 14.5 q1.8 4.5 3.6 0 v-5 q1.8-4.5 3.6 0 v5 q1.8 4.5 3.6 0 v-5 q1.8-4.5 3.6 0 v5 q1.8 4.5 3.6 0 q1.5-2.5 3.5 0" fill="none" stroke="#1a81c4" stroke-width="1.9" stroke-linecap="round"/><path d="M28 20.5 V29 H19.5z" fill="#000"/></svg>
<svg class="ic" style="left:7px;top:191px;width:24px;height:24px" viewBox="0 0 24 24"><circle cx="12" cy="12" r="5.5" fill="#fff" stroke="#f29100" stroke-width="3.6"/></svg>
<svg class="ic" style="left:7px;top:226px;width:24px;height:24px" viewBox="0 0 24 24"><path d="M8.5 2 h13 v19.5 h-20 v-10 h7z" fill="#1a81c4"/><circle cx="16" cy="10.5" r="3.8" fill="#f0f0f0"/><path d="M16 10.5 h6" stroke="#f0f0f0" stroke-width="3.4"/><circle cx="16" cy="10.5" r="1.5" fill="#545454"/><path d="M16 10.5 h5.5" stroke="#545454" stroke-width="1.2"/></svg>
<svg class="ic" style="left:7px;top:262px;width:24px;height:24px" viewBox="0 0 24 24"><defs><pattern id="hp" width="4.5" height="4.5" patternUnits="userSpaceOnUse" patternTransform="rotate(-45)"><rect width="2.4" height="4.5" fill="#545454"/></pattern></defs><path d="M9 2.5 h12.5 v19 h-19 v-10 h6.5z" fill="#f0f0f0"/><path d="M9 2.5 h12.5 v19 h-19 v-10 h6.5z" fill="url(#hp)" stroke="#545454" stroke-width="1.2"/></svg>
<svg class="ic" style="left:7px;top:304px;width:24px;height:24px" viewBox="0 0 24 24"><path d="M2.5 21 L22 3.5" stroke="#545454" stroke-width="1.6"/></svg>
<svg class="ic" style="left:7px;top:339px;width:24px;height:24px" viewBox="0 0 24 24"><path d="M3 21 C3.5 11 10 4 21 3" fill="none" stroke="#545454" stroke-width="1.6"/></svg>
<svg class="ic" style="left:7px;top:374px;width:24px;height:24px" viewBox="0 0 24 24"><rect x="2.5" y="4.5" width="19" height="15.5" fill="#b9b9b9" stroke="#545454" stroke-width="1.5"/></svg>
<svg class="ic" style="left:7px;top:409px;width:24px;height:24px" viewBox="0 0 24 24"><circle cx="12" cy="12" r="9.5" fill="#b9b9b9" stroke="#545454" stroke-width="1.5"/></svg>
<svg class="ic" style="left:7px;top:444px;width:24px;height:24px" viewBox="0 0 24 24"><path d="M2.5 3.5 L21.5 6 L20 17 L3.5 21.5 L11.5 11z" fill="#b9b9b9" stroke="#545454" stroke-width="1.5" stroke-linejoin="round"/></svg>
<svg class="ic" style="left:7px;top:479px;width:24px;height:24px" viewBox="0 0 24 24"><rect x="1.5" y="1.5" width="21" height="21" rx="3" fill="#545454"/><path d="M3.5 18 l5.5-7 3.5 4 2.5-2.5 5.5 5.5z" fill="#fff"/><circle cx="17" cy="7" r="2.2" fill="#fff"/></svg>
<svg class="ic" style="left:7px;top:514px;width:24px;height:24px" viewBox="0 0 24 24"><path d="M3.5 3 h17 v3 h-6.8 v15.5 h-3.4 v-15.5 h-6.8z" fill="#545454"/></svg>
<svg class="ic" style="left:7px;top:549px;width:24px;height:24px" viewBox="0 0 24 24"><rect x="2.5" y="4" width="19" height="16" fill="#c9c9c9" stroke="#545454" stroke-width="1.5"/><path d="M6 9 h12 M6 12 h9 M6 15 h11" stroke="#545454" stroke-width="1"/></svg>
<svg class="ic" style="left:7px;top:585px;width:24px;height:24px" viewBox="0 0 24 24"><path d="M2 16 L5.5 22 M13.5 1.5 L17.5 6.5" stroke="#545454" stroke-width="1"/><path d="M5 17 L14.5 6" stroke="#545454" stroke-width="1"/><path d="M4.3 17.8 l.600-3.2 2 1.8z M15.2 5.2 l-.600 3.2 -2-1.8z" fill="#545454"/><circle cx="7" cy="22" r="2.4" fill="#1a81c4"/><circle cx="20" cy="8" r="2.4" fill="#1a81c4"/><path d="M28 20.5 V29 H19.5z" fill="#000"/></svg>
<svg class="ic" style="left:7px;top:620px;width:24px;height:24px" viewBox="0 0 24 24"><path d="M3.5 1 v16.5 l3.8-3.5 2.6 5.5 2.7-1.3 -2.7-5.4 5.2-.400z" fill="#545454"/><circle cx="16.5" cy="17" r="6" fill="#c9233f"/><path d="M14 14.5 l5 5 M19 14.5 l-5 5" stroke="#fff" stroke-width="1.9"/></svg>
<svg class="ic" style="left:7px;top:662px;width:24px;height:24px" viewBox="0 0 24 24"><path d="M3 2 V21.5 H22" fill="none" stroke="#545454" stroke-width="1"/><path d="M3 0 l-1.6 3.5 h3.2z M24 21.5 l-3.5-1.6 v3.2z" fill="#545454"/><circle cx="13" cy="10" r="4" fill="none" stroke="#545454" stroke-width="1"/><path d="M13 10 h-4 a4 4 0 0 1 4-4z M13 10 h4 a4 4 0 0 1 -4 4z" fill="#545454"/><path d="M13 3.5 v13 M6.5 10 h13" stroke="#545454" stroke-width="2"/><path d="M28 20.5 V29 H19.5z" fill="#000"/></svg>
<svg class="ic" style="left:7px;top:697px;width:24px;height:24px" viewBox="0 0 24 24"><path d="M1.5 17.5 L18 3.5 L22.5 8.5 L6 22.5z" fill="none" stroke="#545454" stroke-width="1.7" stroke-linejoin="round"/><path d="M6.5 15.5 l1.8 2 M10 12.5 l1.8 2 M13.5 9.5 l1.8 2 M17 6.5 l1.8 2" stroke="#545454" stroke-width="1.2"/></svg>
<div class="abs" style="left:38px;top:0;width:3px;height:1019px;background:#dcdcdc"></div>
</div>
<div id="panel">
<div class="phead" style="top:0;height:19px;line-height:19px">Appearance</div>
<div class="abs" style="left:6px;top:47px;width:171px;height:724px;background:#f2f2f2;border:1px solid #dadada"></div>
<div class="abs" style="left:2px;top:25px;width:50px;height:23px;background:#f9f9f9;border:1px solid #e0e0e0;border-bottom:none;padding:4px 0 0 7px">Layers</div>
<div class="abs" style="left:52px;top:27px;width:51px;height:20px;border:1px solid #dadada;border-left:none;border-bottom:none;padding:3px 0 0 6px">Objects</div>
<div class="abs" style="left:103px;top:27px;width:46px;height:20px;border:1px solid #dadada;border-left:none;border-bottom:none;padding:3px 0 0 6px">Nets</div>
<div class="lrow" style="top:49px;background:#e2e2e2"><svg class="abs" style="left:4px;top:4px" width="6" height="10" viewBox="0 0 6 10"><path d="M0 0 L5.5 5 L0 10z" fill="#2a2ae0"/></svg><div class="sw" style="background:#c83434"></div><svg width="17" height="16" viewBox="0 0 17 16"><circle cx="8.5" cy="8" r="7.8" fill="#545454"/><path d="M2.2 8 q6.3-7 12.6 0 q-6.3 7-12.6 0z" fill="#f0f0f0"/><circle cx="8.5" cy="8" r="2.7" fill="#545454"/><circle cx="8.5" cy="8" r="1" fill="#f0f0f0"/></svg><div class="nm">F.Cu</div></div>
<div class="lrow" style="top:67px"><div class="sw" style="background:#4d7fc4"></div><svg width="17" height="16" viewBox="0 0 17 16"><circle cx="8.5" cy="8" r="7.8" fill="#545454"/><path d="M2.2 8 q6.3-7 12.6 0 q-6.3 7-12.6 0z" fill="#f0f0f0"/><circle cx="8.5" cy="8" r="2.7" fill="#545454"/><circle cx="8.5" cy="8" r="1" fill="#f0f0f0"/></svg><div class="nm">B.Cu</div></div>
<div class="lrow" style="top:85px"><div class="sw" style="background:#840084"></div><svg width="17" height="16" viewBox="0 0 17 16"><circle cx="8.5" cy="8" r="7.8" fill="#545454"/><path d="M2.2 8 q6.3-7 12.6 0 q-6.3 7-12.6 0z" fill="#f0f0f0"/><circle cx="8.5" cy="8" r="2.7" fill="#545454"/><circle cx="8.5" cy="8" r="1" fill="#f0f0f0"/></svg><div class="nm">F.Adhesive</div></div>
<div class="lrow" style="top:103px"><div class="sw" style="background:#000084"></div><svg width="17" height="16" viewBox="0 0 17 16"><circle cx="8.5" cy="8" r="7.8" fill="#545454"/><path d="M2.2 8 q6.3-7 12.6 0 q-6.3 7-12.6 0z" fill="#f0f0f0"/><circle cx="8.5" cy="8" r="2.7" fill="#545454"/><circle cx="8.5" cy="8" r="1" fill="#f0f0f0"/></svg><div class="nm">B.Adhesive</div></div>
<div class="lrow" style="top:121px"><div class="sw" style="background:#b4a09a"></div><svg width="17" height="16" viewBox="0 0 17 16"><circle cx="8.5" cy="8" r="7.8" fill="#545454"/><path d="M2.2 8 q6.3-7 12.6 0 q-6.3 7-12.6 0z" fill="#f0f0f0"/><circle cx="8.5" cy="8" r="2.7" fill="#545454"/><circle cx="8.5" cy="8" r="1" fill="#f0f0f0"/></svg><div class="nm">F.Paste</div></div>
<div class="lrow" style="top:139px"><div class="sw" style="background:#00c2c2"></div><svg width="17" height="16" viewBox="0 0 17 16"><circle cx="8.5" cy="8" r="7.8" fill="#545454"/><path d="M2.2 8 q6.3-7 12.6 0 q-6.3 7-12.6 0z" fill="#f0f0f0"/><circle cx="8.5" cy="8" r="2.7" fill="#545454"/><circle cx="8.5" cy="8" r="1" fill="#f0f0f0"/></svg><div class="nm">B.Paste</div></div>
<div class="lrow" style="top:157px"><div class="sw" style="background:#f2eda1"></div><svg width="17" height="16" viewBox="0 0 17 16"><circle cx="8.5" cy="8" r="7.8" fill="#545454"/><path d="M2.2 8 q6.3-7 12.6 0 q-6.3 7-12.6 0z" fill="#f0f0f0"/><circle cx="8.5" cy="8" r="2.7" fill="#545454"/><circle cx="8.5" cy="8" r="1" fill="#f0f0f0"/></svg><div class="nm">F.Silkscreen</div></div>
<div class="lrow" style="top:175px"><div class="sw" style="background:#e8b2a7"></div><svg width="17" height="16" viewBox="0 0 17 16"><circle cx="8.5" cy="8" r="7.8" fill="#545454"/><path d="M2.2 8 q6.3-7 12.6 0 q-6.3 7-12.6 0z" fill="#f0f0f0"/><circle cx="8.5" cy="8" r="2.7" fill="#545454"/><circle cx="8.5" cy="8" r="1" fill="#f0f0f0"/></svg><div class="nm">B.Silkscreen</div></div>
<div class="lrow" style="top:193px"><div class="sw" style="background:#d864ff"></div><svg width="17" height="16" viewBox="0 0 17 16"><circle cx="8.5" cy="8" r="7.8" fill="#545454"/><path d="M2.2 8 q6.3-7 12.6 0 q-6.3 7-12.6 0z" fill="#f0f0f0"/><circle cx="8.5" cy="8" r="2.7" fill="#545454"/><circle cx="8.5" cy="8" r="1" fill="#f0f0f0"/></svg><div class="nm">F.Mask</div></div>
<div class="lrow" style="top:211px"><div class="sw" style="background:#02ffee"></div><svg width="17" height="16" viewBox="0 0 17 16"><circle cx="8.5" cy="8" r="7.8" fill="#545454"/><path d="M2.2 8 q6.3-7 12.6 0 q-6.3 7-12.6 0z" fill="#f0f0f0"/><circle cx="8.5" cy="8" r="2.7" fill="#545454"/><circle cx="8.5" cy="8" r="1" fill="#f0f0f0"/></svg><div class="nm">B.Mask</div></div>
<div class="lrow" style="top:229px"><div class="sw" style="background:#c2c2c2"></div><svg width="17" height="16" viewBox="0 0 17 16"><circle cx="8.5" cy="8" r="7.8" fill="#545454"/><path d="M2.2 8 q6.3-7 12.6 0 q-6.3 7-12.6 0z" fill="#f0f0f0"/><circle cx="8.5" cy="8" r="2.7" fill="#545454"/><circle cx="8.5" cy="8" r="1" fill="#f0f0f0"/></svg><div class="nm">User.Drawings</div></div>
<div class="lrow" style="top:247px"><div class="sw" style="background:#5994dc"></div><svg width="17" height="16" viewBox="0 0 17 16"><circle cx="8.5" cy="8" r="7.8" fill="#545454"/><path d="M2.2 8 q6.3-7 12.6 0 q-6.3 7-12.6 0z" fill="#f0f0f0"/><circle cx="8.5" cy="8" r="2.7" fill="#545454"/><circle cx="8.5" cy="8" r="1" fill="#f0f0f0"/></svg><div class="nm">User.Comments</div></div>
<div class="lrow" style="top:265px"><div class="sw" style="background:#b4dbd2"></div><svg width="17" height="16" viewBox="0 0 17 16"><circle cx="8.5" cy="8" r="7.8" fill="#545454"/><path d="M2.2 8 q6.3-7 12.6 0 q-6.3 7-12.6 0z" fill="#f0f0f0"/><circle cx="8.5" cy="8" r="2.7" fill="#545454"/><circle cx="8.5" cy="8" r="1" fill="#f0f0f0"/></svg><div class="nm">User.Eco1</div></div>
<div class="lrow" style="top:283px"><div class="sw" style="background:#d8c852"></div><svg width="17" height="16" viewBox="0 0 17 16"><circle cx="8.5" cy="8" r="7.8" fill="#545454"/><path d="M2.2 8 q6.3-7 12.6 0 q-6.3 7-12.6 0z" fill="#f0f0f0"/><circle cx="8.5" cy="8" r="2.7" fill="#545454"/><circle cx="8.5" cy="8" r="1" fill="#f0f0f0"/></svg><div class="nm">User.Eco2</div></div>
<div class="lrow" style="top:301px"><div class="sw" style="background:#d0d2cd"></div><svg width="17" height="16" viewBox="0 0 17 16"><circle cx="8.5" cy="8" r="7.8" fill="#545454"/><path d="M2.2 8 q6.3-7 12.6 0 q-6.3 7-12.6 0z" fill="#f0f0f0"/><circle cx="8.5" cy="8" r="2.7" fill="#545454"/><circle cx="8.5" cy="8" r="1" fill="#f0f0f0"/></svg><div class="nm">Edge.Cuts</div></div>
<div class="lrow" style="top:319px"><div class="sw" style="background:#ff26e2"></div><svg width="17" height="16" viewBox="0 0 17 16"><circle cx="8.5" cy="8" r="7.8" fill="#545454"/><path d="M2.2 8 q6.3-7 12.6 0 q-6.3 7-12.6 0z" fill="#f0f0f0"/><circle cx="8.5" cy="8" r="2.7" fill="#545454"/><circle cx="8.5" cy="8" r="1" fill="#f0f0f0"/></svg><div class="nm">Margin</div></div>
<div class="lrow" style="top:337px"><div class="sw" style="background:#ff26e2"></div><svg width="17" height="16" viewBox="0 0 17 16"><circle cx="8.5" cy="8" r="7.8" fill="#545454"/><path d="M2.2 8 q6.3-7 12.6 0 q-6.3 7-12.6 0z" fill="#f0f0f0"/><circle cx="8.5" cy="8" r="2.7" fill="#545454"/><circle cx="8.5" cy="8" r="1" fill="#f0f0f0"/></svg><div class="nm">F.Courtyard</div></div>
<div class="lrow" style="top:355px"><div class="sw" style="background:#26e9ff"></div><svg width="17" height="16" viewBox="0 0 17 16"><circle cx="8.5" cy="8" r="7.8" fill="#545454"/><path d="M2.2 8 q6.3-7 12.6 0 q-6.3 7-12.6 0z" fill="#f0f0f0"/><circle cx="8.5" cy="8" r="2.7" fill="#545454"/><circle cx="8.5" cy="8" r="1" fill="#f0f0f0"/></svg><div class="nm">B.Courtyard</div></div>
<div class="lrow" style="top:373px"><div class="sw" style="background:#afafaf"></div><svg width="17" height="16" viewBox="0 0 17 16"><circle cx="8.5" cy="8" r="7.8" fill="#545454"/><path d="M2.2 8 q6.3-7 12.6 0 q-6.3 7-12.6 0z" fill="#f0f0f0"/><circle cx="8.5" cy="8" r="2.7" fill="#545454"/><circle cx="8.5" cy="8" r="1" fill="#f0f0f0"/></svg><div class="nm">F.Fab</div></div>
<div class="lrow" style="top:391px"><div class="sw" style="background:#585d84"></div><svg width="17" height="16" viewBox="0 0 17 16"><circle cx="8.5" cy="8" r="7.8" fill="#545454"/><path d="M2.2 8 q6.3-7 12.6 0 q-6.3 7-12.6 0z" fill="#f0f0f0"/><circle cx="8.5" cy="8" r="2.7" fill="#545454"/><circle cx="8.5" cy="8" r="1" fill="#f0f0f0"/></svg><div class="nm">B.Fab</div></div>
<div class="abs" style="left:10px;top:775px;width:163px;height:19px;background:#fafafa"></div>
<svg class="abs" style="left:16px;top:780px" width="5" height="9" viewBox="0 0 5 9"><path d="M0 0 L4.6 4.5 L0 9z" fill="#000"/></svg>
<div class="abs" style="left:22px;top:776px;white-space:nowrap">Layer Display Options</div>
<div class="abs" style="left:8px;top:805px;white-space:nowrap">Presets (Ctrl+Tab):</div>
<div class="combo" style="left:8px;top:822px;width:166px;font-size:12.2px">All Layers<svg width="10" height="6" viewBox="0 0 10 6"><path d="M.5 .5 L5 5 L9.5 .5" fill="none" stroke="#444" stroke-width="1"/></svg></div>
<div class="abs" style="left:8px;top:848px;white-space:nowrap">Viewports (Shift+Tab):</div>
<div class="combo" style="left:8px;top:865px;width:166px">---<svg width="10" height="6" viewBox="0 0 10 6"><path d="M.5 .5 L5 5 L9.5 .5" fill="none" stroke="#444" stroke-width="1"/></svg></div>
<div class="phead" style="top:900px;height:20px;line-height:20px">Selection Filter</div>
<div class="cb" style="left:6px;top:926px"><svg width="13" height="13" viewBox="0 0 13 13"><path d="M3 6.7 l2.5 2.5 4.7-5" fill="none" stroke="#fff" stroke-width="1.2"/></svg></div><div class="cbt" style="left:22px;top:925px">All items</div>
<div class="cb" style="left:98px;top:926px"><svg width="13" height="13" viewBox="0 0 13 13"><path d="M3 6.7 l2.5 2.5 4.7-5" fill="none" stroke="#fff" stroke-width="1.2"/></svg></div><div class="cbt" style="left:114px;top:925px">Locked items</div>
<div class="cb" style="left:6px;top:941px"><svg width="13" height="13" viewBox="0 0 13 13"><path d="M3 6.7 l2.5 2.5 4.7-5" fill="none" stroke="#fff" stroke-width="1.2"/></svg></div><div class="cbt" style="left:22px;top:940px">Footprints</div>
<div class="cb" style="left:98px;top:941px"><svg width="13" height="13" viewBox="0 0 13 13"><path d="M3 6.7 l2.5 2.5 4.7-5" fill="none" stroke="#fff" stroke-width="1.2"/></svg></div><div class="cbt" style="left:114px;top:940px">Text</div>
<div class="cb" style="left:6px;top:956px"><svg width="13" height="13" viewBox="0 0 13 13"><path d="M3 6.7 l2.5 2.5 4.7-5" fill="none" stroke="#fff" stroke-width="1.2"/></svg></div><div class="cbt" style="left:22px;top:955px">Tracks</div>
<div class="cb" style="left:98px;top:956px"><svg width="13" height="13" viewBox="0 0 13 13"><path d="M3 6.7 l2.5 2.5 4.7-5" fill="none" stroke="#fff" stroke-width="1.2"/></svg></div><div class="cbt" style="left:114px;top:955px">Vias</div>
<div class="cb" style="left:6px;top:971px"><svg width="13" height="13" viewBox="0 0 13 13"><path d="M3 6.7 l2.5 2.5 4.7-5" fill="none" stroke="#fff" stroke-width="1.2"/></svg></div><div class="cbt" style="left:22px;top:970px">Pads</div>
<div class="cb" style="left:98px;top:971px"><svg width="13" height="13" viewBox="0 0 13 13"><path d="M3 6.7 l2.5 2.5 4.7-5" fill="none" stroke="#fff" stroke-width="1.2"/></svg></div><div class="cbt" style="left:114px;top:970px">Graphics</div>
<div class="cb" style="left:6px;top:986px"><svg width="13" height="13" viewBox="0 0 13 13"><path d="M3 6.7 l2.5 2.5 4.7-5" fill="none" stroke="#fff" stroke-width="1.2"/></svg></div><div class="cbt" style="left:22px;top:985px">Zones</div>
<div class="cb" style="left:98px;top:986px"><svg width="13" height="13" viewBox="0 0 13 13"><path d="M3 6.7 l2.5 2.5 4.7-5" fill="none" stroke="#fff" stroke-width="1.2"/></svg></div><div class="cbt" style="left:114px;top:985px">Rule Areas</div>
<div class="cb" style="left:6px;top:1001px"><svg width="13" height="13" viewBox="0 0 13 13"><path d="M3 6.7 l2.5 2.5 4.7-5" fill="none" stroke="#fff" stroke-width="1.2"/></svg></div><div class="cbt" style="left:22px;top:1000px">Dimensions</div>
<div class="cb" style="left:98px;top:1001px"><svg width="13" height="13" viewBox="0 0 13 13"><path d="M3 6.7 l2.5 2.5 4.7-5" fill="none" stroke="#fff" stroke-width="1.2"/></svg></div><div class="cbt" style="left:114px;top:1000px">Other items</div>
</div>
<svg id="cv" viewBox="36 123 1450 1019" width="1450" height="1019">
<defs><g id="sw"><rect x="-37.5" y="-37.5" width="76" height="75" fill="none" stroke="#afafaf" stroke-width="1"/><rect x="-35.5" y="-35.5" width="71" height="71" fill="none" stroke="#d8c852" stroke-width="1"/><rect x="-12.5" y="-31.5" width="25" height="16" fill="none" stroke="#d8c852" stroke-width="1"/><g fill="#1ac4d2"><circle r="14"/><circle cx="-27" r="7"/><circle cx="27" r="7"/><circle cx="25.9" cy="-21.1" r="4"/></g><g fill="none" stroke="#001023" stroke-width=".9" stroke-dasharray="3.4 1.3"><circle cx="-27" r="5.2"/><circle cx="27" r="5.2"/></g><g fill="#001023" stroke="#e3b72e" stroke-width="3.4"><circle cx="19" cy="13" r="5.4"/><circle cx="-13" cy="26.5" r="5.1"/><circle cx="0" cy="29.6" r="5.2"/><circle cx="13.2" cy="29" r="5.4"/></g><path d="M-25.1 18.7 L-22.7 24.4" stroke="#e3b72e" stroke-width="13.2" stroke-linecap="round"/><path d="M-25.1 18.7 L-22.7 24.4" stroke="#001023" stroke-width="6.2" stroke-linecap="round"/></g><g id="dd"><rect x="-3.6" y="-9.7" width="7.2" height="4.5" fill="#4d7fc4"/><rect x="-3.6" y="4.9" width="7.2" height="4.6" fill="#4d7fc4"/><path d="M-3 -3 h6 l-3 5.5z M-3 2.8 h6" fill="none" stroke="#e8b2a7" stroke-width=".9"/><circle cy="-15" r="3" fill="#001023" stroke="#e3b72e" stroke-width="2.6"/><path d="M-4.6 9.5 h9.2 v11.2 h-9.2z M-1.7 15 a1.7 1.7 0 1 0 3.4 0 a1.7 1.7 0 1 0 -3.4 0z" fill="#e3b72e" fill-rule="evenodd"/></g><g id="mp"><circle r="3.7" fill="none" stroke="#e3b72e" stroke-width="3"/></g></defs>
<g shape-rendering="crispEdges" fill="none"><path stroke="#70747a" stroke-width="1" stroke-dasharray="1 11.84" d="M44.2 128.5H1486 M44.2 141.5H1486 M44.2 153.5H1486 M44.2 166.5H1486 M44.2 179.5H1486 M44.2 192.5H1486 M44.2 205.5H1486 M44.2 218.5H1486 M44.2 231.5H1486 M44.2 256.5H1486 M44.2 269.5H1486 M44.2 282.5H1486 M44.2 295.5H1486 M44.2 308.5H1486 M44.2 320.5H1486 M44.2 333.5H1486 M44.2 346.5H1486 M44.2 359.5H1486 M44.2 385.5H1486 M44.2 397.5H1486 M44.2 410.5H1486 M44.2 423.5H1486 M44.2 436.5H1486 M44.2 449.5H1486 M44.2 462.5H1486 M44.2 474.5H1486 M44.2 487.5H1486 M44.2 513.5H1486 M44.2 526.5H1486 M44.2 539.5H1486 M44.2 552.5H1486 M44.2 564.5H1486 M44.2 577.5H1486 M44.2 590.5H1486 M44.2 603.5H1486 M44.2 616.5H1486 M44.2 641.5H1486 M44.2 654.5H1486 M44.2 667.5H1486 M44.2 680.5H1486 M44.2 693.5H1486 M44.2 706.5H1486 M44.2 718.5H1486 M44.2 731.5H1486 M44.2 744.5H1486 M44.2 770.5H1486 M44.2 783.5H1486 M44.2 795.5H1486 M44.2 808.5H1486 M44.2 821.5H1486 M44.2 834.5H1486 M44.2 847.5H1486 M44.2 860.5H1486 M44.2 873.5H1486 M44.2 898.5H1486 M44.2 911.5H1486 M44.2 924.5H1486 M44.2 937.5H1486 M44.2 950.5H1486 M44.2 962.5H1486 M44.2 975.5H1486 M44.2 988.5H1486 M44.2 1001.5H1486 M44.2 1027.5H1486 M44.2 1039.5H1486 M44.2 1052.5H1486 M44.2 1065.5H1486 M44.2 1078.5H1486 M44.2 1091.5H1486 M44.2 1104.5H1486 M44.2 1116.5H1486 M44.2 1129.5H1486"/><path stroke="#80848a" stroke-width="2" stroke-dasharray="1 11.84" d="M44.2 244H1486 M44.2 373H1486 M44.2 501H1486 M44.2 630H1486 M44.2 758H1486 M44.2 886H1486 M44.2 1015H1486"/><path stroke="#80848a" stroke-width="2" stroke-dasharray="1 11.84" d="M161 127.78V1142 M289 127.78V1142 M418 127.78V1142 M546 127.78V1142 M674 127.78V1142 M803 127.78V1142 M931 127.78V1142 M1060 127.78V1142 M1188 127.78V1142 M1316 127.78V1142 M1445 127.78V1142"/><path stroke="#b4b4b4" stroke-width="2" stroke-dasharray="2 126.4" d="M160.001 244H1486 M160.001 373H1486 M160.001 501H1486 M160.001 630H1486 M160.001 758H1486 M160.001 886H1486 M160.001 1015H1486"/></g>
<g fill="none" stroke="#c872ab" stroke-width="1"><path d="M50.5 1142 V303.5 H1451.5 V1142 M60.5 1142 V313.5 H1441.5 V1142"/><path d="M303.5 303.5 V313.5"/><path d="M556.5 303.5 V313.5"/><path d="M808.5 303.5 V313.5"/><path d="M1061.5 303.5 V313.5"/><path d="M1314.5 303.5 V313.5"/><path d="M50.5 556.5 H60.5 M1441.5 556.5 H1451.5"/><path d="M50.5 808.5 H60.5 M1441.5 808.5 H1451.5"/><path d="M50.5 1061.5 H60.5 M1441.5 1061.5 H1451.5"/><path d="M1441.5 1092.5 H894.5 V1142"/></g><g font-family="Liberation Sans,sans-serif" font-size="8.5" fill="#c872ab" text-anchor="middle"><text x="180" y="312">1</text><text x="433" y="312">2</text><text x="686" y="312">3</text><text x="939" y="312">4</text><text x="1192" y="312">5</text><text x="1445" y="312">6</text><text x="55.5" y="433">A</text><text x="1446.5" y="433">A</text><text x="55.5" y="686">B</text><text x="1446.5" y="686">B</text><text x="55.5" y="939">C</text><text x="1446.5" y="939">C</text></g>
<g fill="none" stroke="#d0d2cd" stroke-width="1.1" stroke-linejoin="round"><path d="M69 365.2 H1453 q4 0 4 4 V391 q0 4 -4 4 H1231 q-3 0 -3 3 V413.5 M1204.4 413.5 V398 q0-3 -3-3 H1039.2 q-3 0 -3 3 V413.5 M1012.3 413.5 V398 q0-3 -3-3 H511.7 q-3 0 -3 3 V413.5 M484.8 413.5 V398 q0-3 -3-3 H319.6 q-3 0 -3 3 V413.5 M293 413.5 V398 q0-3 -3-3 H69 q-4 0 -4-4 V369.2 q0-4 4-4"/><path d="M69 730.7 H337 q4 0 4 4 V876.5 q0 4 4 4 H1183 q4 0 4-4 V734.7 q0-4 4-4 H1453 q4 0 4 4 V893.5 q0 4 -4 4 H69 q-4 0 -4-4 V734.7 q0-4 4-4"/><path d="M66.2 723.6 L66.2 443 L69 440 L258.3 440 L258.3 415.6 L354 415.6 L354 404.6 L445.5 404.6 L445.5 415.6 L541.5 415.6 L541.5 428.2 L637 428.2 L637 439.5 L739.5 439.5 L742.7 442.5 L742.7 745.7 L676.5 862.5 L671 866.3 L664 865.8 L598.5 827.6 L590.6 822.1 L500 811.1 L402 797.7 L349 723.6z"/><path d="M1454.8 723.6 L1454.8 443 L1452 440 L1262.7 440 L1262.7 415.6 L1167 415.6 L1167 404.6 L1075.5 404.6 L1075.5 415.6 L979.5 415.6 L979.5 428.2 L884 428.2 L884 439.5 L781.5 439.5 L778.3 442.5 L778.3 745.7 L844.5 862.5 L850 866.3 L857 865.8 L922.5 827.6 L930.4 822.1 L1021 811.1 L1119 797.7 L1172 723.6z"/><rect x="157.2" y="444.2" width="5.6" height="72.8" rx="2.8"/><rect x="157.2" y="549" width="5.6" height="63.5" rx="2.8"/><rect x="157.2" y="646.2" width="5.6" height="73.2" rx="2.8"/><rect x="1358.2" y="444.2" width="5.6" height="72.8" rx="2.8"/><rect x="1358.2" y="549" width="5.6" height="63.5" rx="2.8"/><rect x="1358.2" y="646.2" width="5.6" height="73.2" rx="2.8"/></g><g stroke="#1ac4d2" stroke-width="2.4" stroke-dasharray="2 .400"><path d="M291 413.7 H318.5"/><path d="M483 413.7 H510.5"/><path d="M1010.5 413.7 H1038"/><path d="M1202.5 413.7 H1230"/><path d="M97.7 724.7 H125.8"/><path d="M290 724.7 H317.5"/><path d="M1203.5 724.7 H1231"/><path d="M1395.2 724.7 H1423.3"/></g>
<path d="M149.5 475.5 134.5 475.5 129.5 481.5 129.5 488.5 113.5 504.5 102.5 504.5 96.5 506.5 M153.5 505.5 153.5 513.5 158.5 519.5 162.5 519.5 168.5 513.5 168.5 505.5 M168.5 492.5 171.5 493.5 187.5 493.5 194.5 500.5 211.5 500.5 217.5 505.5 235.5 505.5 239.5 501.5 258.5 501.5 M341.5 451.5 326.5 451.5 321.5 457.5 321.5 464.5 305.5 480.5 294.5 480.5 288.5 482.5 M345.5 468.5 360.5 468.5 M360.5 468.5 363.5 457.5 379.5 457.5 386.5 464.5 403.5 464.5 409.5 469.5 427.5 469.5 431.5 465.5 450.5 465.5 M533.5 451.5 518.5 451.5 513.5 457.5 513.5 464.5 497.5 480.5 486.5 480.5 480.5 482.5 M537.5 468.5 552.5 468.5 M552.5 468.5 555.5 481.5 571.5 481.5 578.5 488.5 595.5 488.5 601.5 493.5 619.5 493.5 623.5 489.5 642.5 489.5 M966.5 451.5 963.5 451.5 946.5 469.5 946.5 476.5 930.5 492.5 919.5 492.5 913.5 494.5 M970.5 468.5 985.5 468.5 M985.5 468.5 988.5 469.5 1004.5 469.5 1011.5 476.5 1028.5 476.5 1034.5 481.5 1052.5 481.5 1056.5 477.5 1075.5 477.5 M1158.5 451.5 1151.5 451.5 1145.5 441.5 1138.5 445.5 1138.5 452.5 1122.5 468.5 1111.5 468.5 1105.5 470.5 M1162.5 468.5 1177.5 468.5 M1177.5 468.5 1180.5 469.5 1196.5 469.5 1203.5 476.5 1220.5 476.5 1226.5 481.5 1244.5 481.5 1248.5 477.5 1267.5 477.5 M1350.5 475.5 1335.5 475.5 1330.5 481.5 1330.5 488.5 1314.5 504.5 1303.5 504.5 1297.5 506.5 M1354.5 505.5 1354.5 513.5 1359.5 519.5 1363.5 519.5 1369.5 513.5 1369.5 505.5 M149.5 571.5 134.5 571.5 129.5 577.5 129.5 584.5 113.5 600.5 102.5 600.5 96.5 602.5 M153.5 601.5 153.5 609.5 158.5 615.5 162.5 615.5 168.5 609.5 168.5 601.5 M168.5 588.5 171.5 589.5 187.5 589.5 194.5 596.5 211.5 596.5 217.5 601.5 235.5 601.5 239.5 597.5 258.5 597.5 M341.5 547.5 326.5 547.5 321.5 553.5 321.5 560.5 305.5 576.5 294.5 576.5 288.5 578.5 M345.5 564.5 360.5 564.5 M360.5 564.5 363.5 553.5 379.5 553.5 386.5 560.5 403.5 560.5 409.5 565.5 427.5 565.5 431.5 561.5 450.5 561.5 M533.5 547.5 518.5 547.5 513.5 553.5 513.5 560.5 497.5 576.5 486.5 576.5 480.5 578.5 M537.5 564.5 552.5 564.5 M552.5 564.5 555.5 577.5 571.5 577.5 578.5 584.5 595.5 584.5 601.5 589.5 619.5 589.5 623.5 585.5 642.5 585.5 M966.5 547.5 963.5 547.5 946.5 565.5 946.5 572.5 930.5 588.5 919.5 588.5 913.5 590.5 M970.5 564.5 985.5 564.5 M985.5 564.5 988.5 565.5 1004.5 565.5 1011.5 572.5 1028.5 572.5 1034.5 577.5 1052.5 577.5 1056.5 573.5 1075.5 573.5 M1158.5 547.5 1151.5 547.5 1145.5 537.5 1138.5 541.5 1138.5 548.5 1122.5 564.5 1111.5 564.5 1105.5 566.5 M1162.5 564.5 1177.5 564.5 M1177.5 564.5 1180.5 565.5 1196.5 565.5 1203.5 572.5 1220.5 572.5 1226.5 577.5 1244.5 577.5 1248.5 573.5 1267.5 573.5 M1350.5 571.5 1335.5 571.5 1330.5 577.5 1330.5 584.5 1314.5 600.5 1303.5 600.5 1297.5 602.5 M1354.5 601.5 1354.5 609.5 1359.5 615.5 1363.5 615.5 1369.5 609.5 1369.5 601.5 M149.5 667.5 134.5 667.5 129.5 673.5 129.5 680.5 113.5 696.5 102.5 696.5 96.5 698.5 M153.5 697.5 153.5 705.5 158.5 711.5 162.5 711.5 168.5 705.5 168.5 697.5 M168.5 684.5 171.5 685.5 187.5 685.5 194.5 692.5 211.5 692.5 217.5 697.5 235.5 697.5 239.5 693.5 258.5 693.5 M341.5 643.5 326.5 643.5 321.5 649.5 321.5 656.5 305.5 672.5 294.5 672.5 288.5 674.5 M345.5 660.5 360.5 660.5 M360.5 660.5 363.5 649.5 379.5 649.5 386.5 656.5 403.5 656.5 409.5 661.5 427.5 661.5 431.5 657.5 450.5 657.5 M533.5 643.5 518.5 643.5 513.5 649.5 513.5 656.5 497.5 672.5 486.5 672.5 480.5 674.5 M537.5 660.5 552.5 660.5 M552.5 660.5 555.5 673.5 571.5 673.5 578.5 680.5 595.5 680.5 601.5 685.5 619.5 685.5 623.5 681.5 642.5 681.5 M966.5 643.5 963.5 643.5 946.5 661.5 946.5 668.5 930.5 684.5 919.5 684.5 913.5 686.5 M970.5 660.5 985.5 660.5 M985.5 660.5 988.5 661.5 1004.5 661.5 1011.5 668.5 1028.5 668.5 1034.5 673.5 1052.5 673.5 1056.5 669.5 1075.5 669.5 M1158.5 643.5 1151.5 643.5 1145.5 633.5 1138.5 637.5 1138.5 644.5 1122.5 660.5 1111.5 660.5 1105.5 662.5 M1162.5 660.5 1177.5 660.5 M1177.5 660.5 1180.5 661.5 1196.5 661.5 1203.5 668.5 1220.5 668.5 1226.5 673.5 1244.5 673.5 1248.5 669.5 1267.5 669.5 M1350.5 667.5 1335.5 667.5 1330.5 673.5 1330.5 680.5 1314.5 696.5 1303.5 696.5 1297.5 698.5 M1354.5 697.5 1354.5 705.5 1359.5 711.5 1363.5 711.5 1369.5 705.5 1369.5 697.5 M258.5 501.5 325.5 501.5 340.5 485.5 345.5 480.5 M450.5 465.5 455.5 468.5 479.5 468.5 486.5 481.5 524.5 481.5 537.5 474.5 M1074.5 477.5 1082.5 477.5 1090.5 469.5 1140.5 469.5 1150.5 479.5 1161.5 479.5 M1266.5 477.5 1290.5 477.5 1298.5 493.5 1340.5 493.5 1348.5 501.5 1353.5 501.5 M258.5 597.5 325.5 597.5 340.5 581.5 345.5 576.5 M450.5 561.5 455.5 564.5 479.5 564.5 486.5 577.5 524.5 577.5 537.5 570.5 M1074.5 573.5 1082.5 573.5 1090.5 565.5 1140.5 565.5 1150.5 575.5 1161.5 575.5 M1266.5 573.5 1290.5 573.5 1298.5 589.5 1340.5 589.5 1348.5 597.5 1353.5 597.5 M258.5 693.5 325.5 693.5 340.5 677.5 345.5 672.5 M450.5 657.5 455.5 660.5 479.5 660.5 486.5 673.5 524.5 673.5 537.5 666.5 M1074.5 669.5 1082.5 669.5 1090.5 661.5 1140.5 661.5 1150.5 671.5 1161.5 671.5 M1266.5 669.5 1290.5 669.5 1298.5 685.5 1340.5 685.5 1348.5 693.5 1353.5 693.5 M642.5 493.5 649.5 493.5 653.5 490.5 M642.5 589.5 649.5 589.5 M272.5 598.5 551.5 598.5 558.5 606.5 611.5 606.5 632.5 585.5 632.5 626.5 651.5 606.5 M274.5 599.5 549.5 599.5 557.5 608.5 612.5 608.5 634.5 586.5 634.5 611.5 651.5 593.5 M276.5 601.5 548.5 601.5 556.5 609.5 614.5 609.5 636.5 587.5 636.5 595.5 651.5 580.5 M278.5 603.5 547.5 603.5 554.5 611.5 616.5 611.5 639.5 588.5 639.5 580.5 651.5 568.5 M280.5 604.5 546.5 604.5 553.5 613.5 618.5 613.5 641.5 589.5 641.5 565.5 651.5 555.5 M282.5 606.5 545.5 606.5 552.5 614.5 620.5 614.5 644.5 590.5 644.5 550.5 651.5 542.5 M871.5 606.5 885.5 620.5 888.5 608.5 891.5 610.5 960.5 610.5 970.5 599.5 1290.5 599.5 M871.5 593.5 882.5 605.5 885.5 610.5 888.5 612.5 958.5 612.5 971.5 601.5 1293.5 601.5 M871.5 580.5 880.5 590.5 883.5 612.5 886.5 614.5 957.5 614.5 972.5 602.5 1296.5 602.5 M871.5 568.5 877.5 574.5 880.5 614.5 883.5 616.5 956.5 616.5 973.5 604.5 1299.5 604.5 M871.5 555.5 875.5 559.5 878.5 616.5 881.5 618.5 954.5 618.5 975.5 606.5 1302.5 606.5 M871.5 542.5 873.5 544.5 876.5 618.5 879.5 620.5 953.5 620.5 976.5 607.5 1305.5 607.5 M624.5 697.5 590.5 728.5 488.5 728.5 489.5 738.5 M504.5 738.5 511.5 733.5 551.5 733.5 561.5 741.5 561.5 749.5 569.5 760.5 589.5 760.5 601.5 775.5 630.5 775.5 646.5 788.5 667.5 808.5 M407.5 760.5 430.5 760.5 443.5 773.5 474.5 773.5 481.5 766.5 489.5 762.5 M489.5 745.5 504.5 745.5 M504.5 760.5 514.5 752.5 526.5 769.5 538.5 775.5 M964.5 705.5 964.5 712.5 978.5 724.5 1033.5 724.5 1037.5 729.5 1032.5 738.5 M828.5 770.5 924.5 770.5 941.5 752.5 1008.5 752.5 1016.5 746.5 M988.5 782.5 963.5 782.5 M994.5 779.5 1024.5 750.5 1032.5 750.5 M1017.5 745.5 1032.5 745.5 M1113.5 762.5 1100.5 775.5 1075.5 775.5 1068.5 768.5 M653.5 471.5 725.5 471.5 730.5 465.5 M653.5 503.5 688.5 503.5 700.5 513.5 717.5 513.5 719.5 516.5 719.5 612.5 M653.5 501.5 686.5 501.5 699.5 512.5 721.5 512.5 722.5 514.5 722.5 612.5 M730.5 478.5 737.5 484.5 M590.5 505.5 620.5 505.5 632.5 493.5 638.5 493.5 M628.5 471.5 648.5 491.5 653.5 490.5" fill="none" stroke="#4d7fc4" stroke-width="1" stroke-linejoin="round"/><path d="M653.8 478 718 478 730.9 490.7 M653.8 478 638.3 493.5 638.3 512 M638.3 506.9 653.8 504 M790.8 478 855.5 478 868.2 490.7 M797 509.8 872 509.8 883.2 512.7 M680 628.9 656.8 628.9 642.3 644.3 642 650.8 M836 622 812 622 800 634 800 650 M838 650 822 664 812 664 M709.7 661.6 712 676 717 684" fill="none" stroke="#4d7fc4" stroke-width="2.6" stroke-linejoin="round" stroke-linecap="round"/>
<g fill="#1ac4d2"><circle cx="160" cy="533" r="12"/><circle cx="1361" cy="533" r="12"/><circle cx="256" cy="533" r="12"/><circle cx="1265" cy="533" r="12"/><circle cx="160" cy="629" r="12"/><circle cx="1361" cy="629" r="12"/><circle cx="256" cy="629" r="12"/><circle cx="1265" cy="629" r="12"/><circle cx="544" cy="515" r="12"/><circle cx="977" cy="515" r="12"/><circle cx="378.3" cy="716.5" r="12"/><circle cx="1142.7" cy="716.5" r="12"/><circle cx="614" cy="755" r="12"/><circle cx="907" cy="755" r="12"/><circle cx="656.8" cy="679.7" r="7"/><circle cx="864.2" cy="679.7" r="7"/><circle cx="730" cy="722.6" r="7"/><circle cx="791" cy="722.6" r="7"/></g><g fill="none" stroke="#9aa0a8" stroke-width="1"><circle cx="160" cy="629" r="15.2"/><path d="M152 621 l16 16 M168 621 l-16 16" stroke-width=".800"/></g><g fill="none" stroke="#d01818" stroke-width="1.2"><circle cx="378.3" cy="716.5" r="15.8"/><path d="M362.5 716.5 h31.6 M378.5 700.7 v31.6"/></g>
<path d="M127.5 520.5 127.5 589.5 M127.5 616.5 127.5 685.5 M131.5 504.5 131.5 507.5 127.5 511.5 M131.5 600.5 131.5 603.5 127.5 607.5 M131.5 696.5 131.5 699.5 127.5 703.5 M222.5 520.5 222.5 589.5 M222.5 616.5 222.5 685.5 M227.5 504.5 227.5 507.5 222.5 511.5 M227.5 600.5 227.5 603.5 222.5 607.5 M227.5 696.5 227.5 699.5 222.5 703.5 M318.5 496.5 318.5 565.5 M318.5 592.5 318.5 661.5 M323.5 480.5 323.5 483.5 318.5 487.5 M323.5 576.5 323.5 579.5 318.5 583.5 M323.5 672.5 323.5 675.5 318.5 679.5 M414.5 484.5 414.5 553.5 M414.5 580.5 414.5 649.5 M419.5 468.5 419.5 471.5 414.5 475.5 M419.5 564.5 419.5 567.5 414.5 571.5 M419.5 660.5 419.5 663.5 414.5 667.5 M510.5 496.5 510.5 565.5 M510.5 592.5 510.5 661.5 M515.5 480.5 515.5 483.5 510.5 487.5 M515.5 576.5 515.5 579.5 510.5 583.5 M515.5 672.5 515.5 675.5 510.5 679.5 M606.5 508.5 606.5 577.5 M606.5 604.5 606.5 673.5 M611.5 492.5 611.5 495.5 606.5 499.5 M611.5 588.5 611.5 591.5 606.5 595.5 M611.5 684.5 611.5 687.5 606.5 691.5 M1423.5 520.5 1423.5 589.5 M1423.5 616.5 1423.5 685.5 M1428.5 504.5 1428.5 507.5 1423.5 511.5 M1428.5 600.5 1428.5 603.5 1423.5 607.5 M1428.5 696.5 1428.5 699.5 1423.5 703.5 M1328.5 520.5 1328.5 589.5 M1328.5 616.5 1328.5 685.5 M1332.5 504.5 1332.5 507.5 1328.5 511.5 M1332.5 600.5 1332.5 603.5 1328.5 607.5 M1332.5 696.5 1332.5 699.5 1328.5 703.5 M1232.5 496.5 1232.5 565.5 M1232.5 592.5 1232.5 661.5 M1236.5 480.5 1236.5 483.5 1232.5 487.5 M1236.5 576.5 1236.5 579.5 1232.5 583.5 M1236.5 672.5 1236.5 675.5 1232.5 679.5 M1135.5 484.5 1135.5 553.5 M1135.5 580.5 1135.5 649.5 M1140.5 468.5 1140.5 471.5 1135.5 475.5 M1140.5 564.5 1140.5 567.5 1135.5 571.5 M1140.5 660.5 1140.5 663.5 1135.5 667.5 M1040.5 496.5 1040.5 565.5 M1040.5 592.5 1040.5 661.5 M1044.5 480.5 1044.5 483.5 1040.5 487.5 M1044.5 576.5 1044.5 579.5 1040.5 583.5 M1044.5 672.5 1044.5 675.5 1040.5 679.5 M943.5 508.5 943.5 577.5 M943.5 604.5 943.5 673.5 M948.5 492.5 948.5 495.5 943.5 499.5 M948.5 588.5 948.5 591.5 943.5 595.5 M948.5 684.5 948.5 687.5 943.5 691.5 M168.5 473.5 168.5 490.5 177.5 499.5 182.5 502.5 M360.5 449.5 360.5 454.5 369.5 463.5 374.5 466.5 M552.5 449.5 552.5 478.5 561.5 487.5 566.5 490.5 M985.5 449.5 985.5 466.5 994.5 475.5 999.5 478.5 M1177.5 449.5 1177.5 466.5 1186.5 475.5 1191.5 478.5 M1369.5 473.5 1369.5 490.5 1378.5 499.5 1383.5 502.5 M168.5 569.5 168.5 586.5 177.5 595.5 182.5 598.5 M360.5 545.5 360.5 550.5 369.5 559.5 374.5 562.5 M552.5 545.5 552.5 574.5 561.5 583.5 566.5 586.5 M985.5 545.5 985.5 562.5 994.5 571.5 999.5 574.5 M1177.5 545.5 1177.5 562.5 1186.5 571.5 1191.5 574.5 M1369.5 569.5 1369.5 586.5 1378.5 595.5 1383.5 598.5 M168.5 665.5 168.5 682.5 177.5 691.5 182.5 694.5 M360.5 641.5 360.5 646.5 369.5 655.5 374.5 658.5 M552.5 641.5 552.5 670.5 561.5 679.5 566.5 682.5 M985.5 641.5 985.5 658.5 994.5 667.5 999.5 670.5 M1177.5 641.5 1177.5 658.5 1186.5 667.5 1191.5 670.5 M1369.5 665.5 1369.5 682.5 1378.5 691.5 1383.5 694.5 M414.5 671.5 467.5 723.5 467.5 758.5 M510.5 689.5 509.5 712.5 539.5 741.5 539.5 777.5 546.5 784.5 546.5 795.5 M606.5 701.5 605.5 715.5 651.5 761.5 659.5 761.5 665.5 765.5 687.5 774.5 698.5 787.5 M222.5 521.5 222.5 617.5 M127.5 521.5 127.5 617.5 M131.5 601.5 131.5 613.5 152.5 613.5 156.5 617.5 M167.5 588.5 167.5 602.5 157.5 613.5 M222.5 607.5 232.5 616.5 239.5 622.5 M533.5 444.5 527.5 444.5 512.5 459.5 512.5 467.5 502.5 477.5 484.5 477.5 478.5 483.5 M507.5 535.5 495.5 535.5 477.5 553.5 477.5 580.5 M944.5 701.5 929.5 701.5 857.5 791.5 846.5 811.5 M1040.5 689.5 1025.5 690.5 1025.5 707.5 1011.5 721.5 1011.5 752.5 995.5 767.5 988.5 773.5 M1136.5 677.5 1136.5 690.5 1102.5 690.5 1091.5 700.5 1091.5 775.5 M1086.5 727.5 1069.5 727.5 1055.5 741.5 1055.5 757.5 1046.5 766.5 M1349.5 469.5 1338.5 469.5 1327.5 480.5 1327.5 490.5 1316.5 501.5 1296.5 501.5 M1324.5 555.5 1305.5 555.5 1294.5 566.5 1294.5 594.5 M1326.5 651.5 1312.5 651.5 1296.5 667.5 1296.5 690.5 M1342.5 590.5 1365.5 615.5 1405.5 615.5 M643.5 480.5 643.5 655.5 651.5 656.5 731.5 656.5 M653.5 490.5 643.5 501.5 M718.5 520.5 718.5 612.5 712.5 618.5 706.5 636.5 M720.5 524.5 720.5 610.5 716.5 622.5 712.5 636.5 M730.5 516.5 722.5 526.5 M730.5 529.5 722.5 539.5 M798.5 488.5 812.5 472.5 870.5 472.5 875.5 478.5 875.5 505.5 M868.5 516.5 859.5 526.5 859.5 610.5 850.5 620.5 M868.5 529.5 862.5 536.5 862.5 608.5 M876.5 523.5 876.5 565.5 871.5 576.5 M879.5 523.5 879.5 600.5 M873.5 610.5 873.5 628.5 857.5 644.5 857.5 668.5 831.5 694.5 790.5 694.5 M851.5 667.5 838.5 667.5 806.5 700.5 790.5 700.5" fill="none" stroke="#c83434" stroke-width="1" stroke-linejoin="round"/><path d="M653.8 465.7 637.5 482 637.5 654 647 663 686.6 660.7 705 682.3 729.5 682.3 M647 661 692.4 661 709.7 661.6 M653.8 504.2 665.4 515.5 665.4 623 658.2 629.9 658.2 646.2 667.4 652.5 681.8 652.5 688.6 645.3 692.1 642.7 M730.9 504.2 715.5 520 715.5 589 690.5 614.2 685.2 617 M730.9 504.2 739.1 512.5 739.1 615 731.9 623.6 M730.9 491 730.9 504 M704.9 642.7 724.2 623.1 731.9 623.6 M709.7 661.6 715.5 664.5 719.8 673.2 729.5 674.6 M790.8 465.7 782.8 474 782.8 611 796 619 796 632 790 638 790 645 805 656 818 656 830 643.5 M790.8 504.2 801.1 514 801.1 632 798 636 798 650 801 653 801 672 795 674.6 M868.2 491 868.2 504.2 M868.2 504.2 876.7 512 876.7 610 845 642.4 842.5 643.5 M792 698 811 690" fill="none" stroke="#c83434" stroke-width="2.8" stroke-linejoin="round" stroke-linecap="round"/>
<use href="#sw" transform="translate(112 485)"/><use href="#sw" transform="translate(208 485)"/><use href="#sw" transform="translate(304 461)"/><use href="#sw" transform="translate(400 449)"/><use href="#sw" transform="translate(496 461)"/><use href="#sw" transform="translate(592 473)"/><use href="#sw" transform="translate(112 581)"/><use href="#sw" transform="translate(208 581)"/><use href="#sw" transform="translate(304 557)"/><use href="#sw" transform="translate(400 545)"/><use href="#sw" transform="translate(496 557)"/><use href="#sw" transform="translate(592 569)"/><use href="#sw" transform="translate(112 677)"/><use href="#sw" transform="translate(208 677)"/><use href="#sw" transform="translate(304 653)"/><use href="#sw" transform="translate(400 641)"/><use href="#sw" transform="translate(496 653)"/><use href="#sw" transform="translate(592 665)"/><use href="#sw" transform="translate(448 752)"/><use href="#sw" transform="translate(554.8 766) rotate(15)"/><use href="#sw" transform="translate(666.7 785.1) rotate(-60)"/><rect x="-71" y="-38" width="142" height="76" fill="none" stroke="#afafaf" stroke-width="1" transform="translate(666.7 785.1) rotate(-60)"/><use href="#sw" transform="translate(1409 485)"/><use href="#sw" transform="translate(1313 485)"/><use href="#sw" transform="translate(1217 461)"/><use href="#sw" transform="translate(1121 449)"/><use href="#sw" transform="translate(1025 461)"/><use href="#sw" transform="translate(929 473)"/><use href="#sw" transform="translate(1409 581)"/><use href="#sw" transform="translate(1313 581)"/><use href="#sw" transform="translate(1217 557)"/><use href="#sw" transform="translate(1121 545)"/><use href="#sw" transform="translate(1025 557)"/><use href="#sw" transform="translate(929 569)"/><use href="#sw" transform="translate(1409 677)"/><use href="#sw" transform="translate(1313 677)"/><use href="#sw" transform="translate(1217 653)"/><use href="#sw" transform="translate(1121 641)"/><use href="#sw" transform="translate(1025 653)"/><use href="#sw" transform="translate(929 665)"/><use href="#sw" transform="translate(1072 752)"/><use href="#sw" transform="translate(966.2 766) rotate(-15)"/><use href="#sw" transform="translate(854.3 785.1) rotate(60)"/><rect x="-71" y="-38" width="142" height="76" fill="none" stroke="#afafaf" stroke-width="1" transform="translate(854.3 785.1) rotate(60)"/>
<use href="#dd" x="153" y="485"/><use href="#dd" x="168" y="485"/><use href="#dd" x="1368" y="485"/><use href="#dd" x="1353" y="485"/><use href="#dd" x="345" y="461"/><use href="#dd" x="360" y="461"/><use href="#dd" x="1176" y="461"/><use href="#dd" x="1161" y="461"/><use href="#dd" x="537" y="461"/><use href="#dd" x="552" y="461"/><use href="#dd" x="984" y="461"/><use href="#dd" x="969" y="461"/><use href="#dd" x="153" y="581"/><use href="#dd" x="168" y="581"/><use href="#dd" x="1368" y="581"/><use href="#dd" x="1353" y="581"/><use href="#dd" x="345" y="557"/><use href="#dd" x="360" y="557"/><use href="#dd" x="1176" y="557"/><use href="#dd" x="1161" y="557"/><use href="#dd" x="537" y="557"/><use href="#dd" x="552" y="557"/><use href="#dd" x="984" y="557"/><use href="#dd" x="969" y="557"/><use href="#dd" x="153" y="677"/><use href="#dd" x="168" y="677"/><use href="#dd" x="1368" y="677"/><use href="#dd" x="1353" y="677"/><use href="#dd" x="345" y="653"/><use href="#dd" x="360" y="653"/><use href="#dd" x="1176" y="653"/><use href="#dd" x="1161" y="653"/><use href="#dd" x="537" y="653"/><use href="#dd" x="552" y="653"/><use href="#dd" x="984" y="653"/><use href="#dd" x="969" y="653"/><use href="#dd" x="407" y="753"/><use href="#dd" x="1114" y="753"/><use href="#dd" x="489" y="753"/><use href="#dd" x="1032" y="753"/><use href="#dd" x="504" y="753"/><use href="#dd" x="1017" y="753"/>
<path d="M647.5 446.5 H737.6 V613.5 H647.5z M673 446.5 V438.5 M711.6 446.5 V438.5" fill="none" stroke="#afafaf" stroke-width="1"/><g fill="none" stroke="#f2eda1" stroke-width="1"><rect x="673" y="431.5" width="38.6" height="7"/><path d="M648.5 464 V459.5 H653.3 M736.6 464 V459.5 H731.9 M648.5 606 V612.5 H657.8 M736.6 606 V612.5 H726.9"/></g><path d="M690.1 433.2 h4.4 l-2.2 3z" fill="#f2eda1"/><path d="M784.5 446.5 H874.9 V613.5 H784.5z M810.2 446.5 V438.5 M848.8 446.5 V438.5" fill="none" stroke="#afafaf" stroke-width="1"/><g fill="none" stroke="#f2eda1" stroke-width="1"><rect x="810.2" y="431.5" width="38.6" height="7"/><path d="M785.5 464 V459.5 H790.3 M873.9 464 V459.5 H869.2 M785.5 606 V612.5 H794.8 M873.9 606 V612.5 H864.2"/></g><path d="M827.3 433.2 h4.4 l-2.2 3z" fill="#f2eda1"/>
<circle cx="638.3" cy="462.6" r="4.2" fill="#4d7fc4" stroke="#1ac4d2" stroke-width=".9"/><circle cx="638.3" cy="462.6" r="5.6" fill="none" stroke="#e8b2a7" stroke-width=".7"/><circle cx="638.3" cy="484.7" r="4.2" fill="#4d7fc4" stroke="#1ac4d2" stroke-width=".9"/><circle cx="638.3" cy="484.7" r="5.6" fill="none" stroke="#e8b2a7" stroke-width=".7"/><circle cx="638.3" cy="507.4" r="4.2" fill="#4d7fc4" stroke="#1ac4d2" stroke-width=".9"/><circle cx="638.3" cy="507.4" r="5.6" fill="none" stroke="#e8b2a7" stroke-width=".7"/><circle cx="883.2" cy="467.6" r="4.2" fill="#4d7fc4" stroke="#1ac4d2" stroke-width=".9"/><circle cx="883.2" cy="467.6" r="5.6" fill="none" stroke="#e8b2a7" stroke-width=".7"/><circle cx="883.2" cy="489.5" r="4.2" fill="#4d7fc4" stroke="#1ac4d2" stroke-width=".9"/><circle cx="883.2" cy="489.5" r="5.6" fill="none" stroke="#e8b2a7" stroke-width=".7"/><circle cx="883.2" cy="512.7" r="4.2" fill="#4d7fc4" stroke="#1ac4d2" stroke-width=".9"/><circle cx="883.2" cy="512.7" r="5.6" fill="none" stroke="#e8b2a7" stroke-width=".7"/><rect x="675.3" y="610.4" width="31.5" height="18.2" fill="none" stroke="#ff26e2" stroke-width="1"/><rect x="678" y="613" width="26.1" height="13.5" fill="none" stroke="#f2eda1" stroke-width="1"/><path d="M691 613 v13.5" stroke="#f2eda1" stroke-width="1"/><path d="M680.6 615.1 h9.2 v9.2 h-9.2z M682.3 619.7 a2.9 2.9 0 1 0 5.8 0 a2.9 2.9 0 1 0 -5.8 0z" fill="#e3b72e" fill-rule="evenodd"/><circle cx="697.9" cy="619.7" r="3.8" fill="#001023" stroke="#e3b72e" stroke-width="1.9"/><rect x="814.1" y="610.4" width="31.6" height="18.2" fill="none" stroke="#ff26e2" stroke-width="1"/><rect x="816.8" y="613" width="26.2" height="13.5" fill="none" stroke="#f2eda1" stroke-width="1"/><path d="M829.9 613 v13.5" stroke="#f2eda1" stroke-width="1"/><path d="M832.4 615.1 h9.2 v9.2 h-9.2z M834.1 619.7 a2.9 2.9 0 1 0 5.8 0 a2.9 2.9 0 1 0 -5.8 0z" fill="#e3b72e" fill-rule="evenodd"/><circle cx="823.7" cy="619.7" r="3.8" fill="#001023" stroke="#e3b72e" stroke-width="1.9"/><rect x="660.8" y="637.5" width="62.60000000000002" height="10.4" fill="none" stroke="#f2eda1" stroke-width="1"/><rect x="661.6" y="639.3000000000001" width="9.2" height="6.8" fill="none" stroke="#e3b72e" stroke-width=".6" stroke-dasharray="1.5 1"/><circle cx="666.2" cy="642.7" r="3.2" fill="#001023" stroke="#e3b72e" stroke-width="2.8"/><rect x="674.5" y="639.3000000000001" width="9.2" height="6.8" fill="none" stroke="#e3b72e" stroke-width=".6" stroke-dasharray="1.5 1"/><circle cx="679.1" cy="642.7" r="3.2" fill="#001023" stroke="#e3b72e" stroke-width="2.8"/><rect x="687.5" y="639.3000000000001" width="9.2" height="6.8" fill="none" stroke="#e3b72e" stroke-width=".6" stroke-dasharray="1.5 1"/><circle cx="692.1" cy="642.7" r="3.2" fill="#001023" stroke="#e3b72e" stroke-width="2.8"/><rect x="700.3" y="639.3000000000001" width="9.2" height="6.8" fill="none" stroke="#e3b72e" stroke-width=".6" stroke-dasharray="1.5 1"/><circle cx="704.9" cy="642.7" r="3.2" fill="#001023" stroke="#e3b72e" stroke-width="2.8"/><rect x="713.3" y="639.3000000000001" width="9.2" height="6.8" fill="none" stroke="#e3b72e" stroke-width=".6" stroke-dasharray="1.5 1"/><circle cx="717.9" cy="642.7" r="3.2" fill="#001023" stroke="#e3b72e" stroke-width="2.8"/><rect x="798.5" y="638.3" width="62.5" height="10.4" fill="none" stroke="#f2eda1" stroke-width="1"/><rect x="799.4" y="640.1" width="9.2" height="6.8" fill="none" stroke="#e3b72e" stroke-width=".6" stroke-dasharray="1.5 1"/><circle cx="804" cy="643.5" r="3.2" fill="#001023" stroke="#e3b72e" stroke-width="2.8"/><rect x="812.4" y="640.1" width="9.2" height="6.8" fill="none" stroke="#e3b72e" stroke-width=".6" stroke-dasharray="1.5 1"/><circle cx="817" cy="643.5" r="3.2" fill="#001023" stroke="#e3b72e" stroke-width="2.8"/><rect x="825.4" y="640.1" width="9.2" height="6.8" fill="none" stroke="#e3b72e" stroke-width=".6" stroke-dasharray="1.5 1"/><circle cx="830" cy="643.5" r="3.2" fill="#001023" stroke="#e3b72e" stroke-width="2.8"/><rect x="837.9" y="640.1" width="9.2" height="6.8" fill="none" stroke="#e3b72e" stroke-width=".6" stroke-dasharray="1.5 1"/><circle cx="842.5" cy="643.5" r="3.2" fill="#001023" stroke="#e3b72e" stroke-width="2.8"/><rect x="850.9" y="640.1" width="9.2" height="6.8" fill="none" stroke="#e3b72e" stroke-width=".6" stroke-dasharray="1.5 1"/><circle cx="855.5" cy="643.5" r="3.2" fill="#001023" stroke="#e3b72e" stroke-width="2.8"/><circle cx="731.9" cy="623.6" r="4.4" fill="#001023" stroke="#e3b72e" stroke-width="2.4"/><circle cx="731.9" cy="656.8" r="4.4" fill="#001023" stroke="#e3b72e" stroke-width="2.4"/><path d="M726.1 627.1 h-1.5 V653.3 h1.5 M738.4 627.1 h1.5 V653.3 h-1.5" fill="none" stroke="#f2eda1" stroke-width="1"/><circle cx="788.9" cy="624.5" r="4.4" fill="#001023" stroke="#e3b72e" stroke-width="2.4"/><circle cx="788.9" cy="657.8" r="4.4" fill="#001023" stroke="#e3b72e" stroke-width="2.4"/><path d="M783.1 628 h-1.5 V654.3 h1.5 M795.4 628 h1.5 V654.3 h-1.5" fill="none" stroke="#f2eda1" stroke-width="1"/><rect x="675.3" y="649.4" width="44.5" height="35.3" fill="none" stroke="#ff26e2" stroke-width="1"/><rect x="801.6" y="650" width="44.1" height="35.5" fill="none" stroke="#ff26e2" stroke-width="1"/><g fill="none" stroke="#f2eda1" stroke-width="1"><path d="M677.5 652 H717 M677.5 655.5 H700 M677.5 665 V682.5 H702 M677.5 665 H700 V672 M690 673.5 h10 v4.5 h-10z M712 679 v-4 h5 v8"/><path d="M805 683 H843.5 V652.5 H825 V661 H832 V657 H825 M822 665.5 H843.5 M822 665.5 v5 H843.5 M843.5 676 H832 v4 h-8 v-5 M805 683 v-5 h7.5 v5"/></g><path d="M704.7 656.6 h10 v10 h-10z M707.3 661.6 a2.4 2.4 0 1 0 4.8 0 a2.4 2.4 0 1 0 -4.8 0z" fill="#e3b72e" fill-rule="evenodd"/><circle cx="709.7" cy="671.7" r="3.8" fill="#001023" stroke="#e3b72e" stroke-width="2.9"/><circle cx="811.7" cy="662.1" r="3.8" fill="#001023" stroke="#e3b72e" stroke-width="2.9"/><path d="M806.7 667.2 h10 v10 h-10z M809.3 672.2 a2.4 2.4 0 1 0 4.8 0 a2.4 2.4 0 1 0 -4.8 0z" fill="#e3b72e" fill-rule="evenodd"/><path d="M719.4 664.3 H742.7 V678.5 H749.9 V694.4 H742.7 V708 H719.4z" fill="none" stroke="#ff26e2" stroke-width="1"/><path d="M727.4 668 V704.5 M727.4 668 H740.9 V704.5 H727.4 M740.9 684 H747.9 V692.5 H740.9" fill="none" stroke="#f2eda1" stroke-width="1"/><circle cx="734.1" cy="678.8" r="3.6" fill="none" stroke="#1ac4d2" stroke-width=".8"/><circle cx="734.1" cy="678.8" r="1.9" fill="#1ac4d2"/><circle cx="734.1" cy="693.9" r="3.6" fill="none" stroke="#1ac4d2" stroke-width=".8"/><circle cx="734.1" cy="693.9" r="1.9" fill="#1ac4d2"/><rect x="724.9" y="665.5" width="3.4" height="4" fill="#c83434"/><rect x="736.9" y="665.5" width="3.4" height="4" fill="#c83434"/><rect x="724.9" y="702.5" width="3.4" height="4" fill="#c83434"/><rect x="736.9" y="702.5" width="3.4" height="4" fill="#c83434"/><rect x="720.9" y="672.2" width="9" height="5.4" fill="#c83434"/><rect x="720.9" y="680.2" width="9" height="5.4" fill="#c83434"/><rect x="720.9" y="696" width="9" height="5.4" fill="#c83434"/><path d="M801.6 664.3 H778.3 V678.5 H771.1 V694.4 H778.3 V708 H801.6z" fill="none" stroke="#ff26e2" stroke-width="1"/><path d="M793.6 668 V704.5 M793.6 668 H780.1 V704.5 H793.6 M780.1 684 H773.1 V692.5 H780.1" fill="none" stroke="#f2eda1" stroke-width="1"/><circle cx="786.9" cy="678.8" r="3.6" fill="none" stroke="#1ac4d2" stroke-width=".8"/><circle cx="786.9" cy="678.8" r="1.9" fill="#1ac4d2"/><circle cx="786.9" cy="693.9" r="3.6" fill="none" stroke="#1ac4d2" stroke-width=".8"/><circle cx="786.9" cy="693.9" r="1.9" fill="#1ac4d2"/><rect x="792.7" y="665.5" width="3.4" height="4" fill="#c83434"/><rect x="780.7" y="665.5" width="3.4" height="4" fill="#c83434"/><rect x="792.7" y="702.5" width="3.4" height="4" fill="#c83434"/><rect x="780.7" y="702.5" width="3.4" height="4" fill="#c83434"/><rect x="791.1" y="672.2" width="9" height="5.4" fill="#c83434"/><rect x="791.1" y="680.2" width="9" height="5.4" fill="#c83434"/><rect x="791.1" y="696" width="9" height="5.4" fill="#c83434"/><rect x="640" y="648.8" width="4" height="4" fill="#ececec"/><rect x="641" y="649.8" width="2" height="2" fill="#e3b72e"/><rect x="809" y="688" width="4" height="4" fill="#ececec"/><rect x="810" y="689" width="2" height="2" fill="#e3b72e"/><rect x="942.1999999999999" y="621.8" width="2.4" height="2.4" fill="#e3b72e"/><rect x="1039.5" y="608.8" width="2.4" height="2.4" fill="#e3b72e"/><rect x="1134.2" y="606.8" width="2.4" height="2.4" fill="#e3b72e"/><rect x="1230.8" y="605.8" width="2.4" height="2.4" fill="#e3b72e"/><rect x="317.2" y="602.8" width="2.4" height="2.4" fill="#e3b72e"/><rect x="413.2" y="602.8" width="2.4" height="2.4" fill="#e3b72e"/><rect x="509.6" y="604.8" width="2.4" height="2.4" fill="#e3b72e"/><rect x="605.5999999999999" y="620.8" width="2.4" height="2.4" fill="#e3b72e"/><rect x="237.8" y="620.8" width="2.4" height="2.4" fill="#e3b72e"/><rect x="1363.8" y="613.8" width="2.4" height="2.4" fill="#e3b72e"/><rect x="869.8" y="574.8" width="2.4" height="2.4" fill="#e3b72e"/><rect x="872.8" y="554.8" width="2.4" height="2.4" fill="#e3b72e"/><rect x="875.8" y="591.8" width="2.4" height="2.4" fill="#e3b72e"/><rect x="877.8" y="598.8" width="2.4" height="2.4" fill="#e3b72e"/>
<g fill="#001023" stroke="#e3b72e" stroke-width="3"><circle cx="653.8" cy="465.7" r="3.5"/><circle cx="730.9" cy="465.7" r="3.5"/><circle cx="653.8" cy="478.5" r="3.5"/><circle cx="730.9" cy="478.5" r="3.5"/><circle cx="653.8" cy="491.3" r="3.5"/><circle cx="730.9" cy="491.3" r="3.5"/><circle cx="653.8" cy="504.1" r="3.5"/><circle cx="730.9" cy="504.1" r="3.5"/><circle cx="653.8" cy="516.9" r="3.5"/><circle cx="730.9" cy="516.9" r="3.5"/><circle cx="653.8" cy="529.8" r="3.5"/><circle cx="730.9" cy="529.8" r="3.5"/><circle cx="653.8" cy="542.6" r="3.5"/><circle cx="730.9" cy="542.6" r="3.5"/><circle cx="653.8" cy="555.4" r="3.5"/><circle cx="730.9" cy="555.4" r="3.5"/><circle cx="653.8" cy="568.2" r="3.5"/><circle cx="730.9" cy="568.2" r="3.5"/><circle cx="653.8" cy="581" r="3.5"/><circle cx="730.9" cy="581" r="3.5"/><circle cx="653.8" cy="593.8" r="3.5"/><circle cx="730.9" cy="593.8" r="3.5"/><circle cx="653.8" cy="606.6" r="3.5"/><circle cx="730.9" cy="606.6" r="3.5"/><circle cx="790.8" cy="465.7" r="3.5"/><circle cx="868.2" cy="465.7" r="3.5"/><circle cx="790.8" cy="478.5" r="3.5"/><circle cx="868.2" cy="478.5" r="3.5"/><circle cx="790.8" cy="491.3" r="3.5"/><circle cx="868.2" cy="491.3" r="3.5"/><circle cx="790.8" cy="504.1" r="3.5"/><circle cx="868.2" cy="504.1" r="3.5"/><circle cx="790.8" cy="516.9" r="3.5"/><circle cx="868.2" cy="516.9" r="3.5"/><circle cx="790.8" cy="529.8" r="3.5"/><circle cx="868.2" cy="529.8" r="3.5"/><circle cx="790.8" cy="542.6" r="3.5"/><circle cx="868.2" cy="542.6" r="3.5"/><circle cx="790.8" cy="555.4" r="3.5"/><circle cx="868.2" cy="555.4" r="3.5"/><circle cx="790.8" cy="568.2" r="3.5"/><circle cx="868.2" cy="568.2" r="3.5"/><circle cx="790.8" cy="581" r="3.5"/><circle cx="868.2" cy="581" r="3.5"/><circle cx="790.8" cy="593.8" r="3.5"/><circle cx="868.2" cy="593.8" r="3.5"/><circle cx="790.8" cy="606.6" r="3.5"/><circle cx="868.2" cy="606.6" r="3.5"/></g>
<g font-family="Liberation Sans,sans-serif" font-size="8.8" fill="#f2eda1" stroke="#f2eda1" stroke-width=".3"><text transform="translate(112 485)" x="-22.8" y="-19.8" text-anchor="middle" textLength="15.3" lengthAdjust="spacingAndGlyphs">SW1</text><text transform="translate(208 485)" x="-22.8" y="-19.8" text-anchor="middle" textLength="15.3" lengthAdjust="spacingAndGlyphs">SW2</text><text transform="translate(304 461)" x="-22.8" y="-19.8" text-anchor="middle" textLength="15.3" lengthAdjust="spacingAndGlyphs">SW3</text><text transform="translate(400 449)" x="-22.8" y="-19.8" text-anchor="middle" textLength="15.3" lengthAdjust="spacingAndGlyphs">SW4</text><text transform="translate(496 461)" x="-22.8" y="-19.8" text-anchor="middle" textLength="15.3" lengthAdjust="spacingAndGlyphs">SW5</text><text transform="translate(592 473)" x="-22.8" y="-19.8" text-anchor="middle" textLength="15.3" lengthAdjust="spacingAndGlyphs">SW6</text><text transform="translate(112 581)" x="-22.8" y="-19.8" text-anchor="middle" textLength="15.3" lengthAdjust="spacingAndGlyphs">SW7</text><text transform="translate(208 581)" x="-22.8" y="-19.8" text-anchor="middle" textLength="15.3" lengthAdjust="spacingAndGlyphs">SW8</text><text transform="translate(304 557)" x="-22.8" y="-19.8" text-anchor="middle" textLength="15.3" lengthAdjust="spacingAndGlyphs">SW9</text><text transform="translate(400 545)" x="-22.8" y="-19.8" text-anchor="middle" textLength="20.2" lengthAdjust="spacingAndGlyphs">SW10</text><text transform="translate(496 557)" x="-22.8" y="-19.8" text-anchor="middle" textLength="20.2" lengthAdjust="spacingAndGlyphs">SW11</text><text transform="translate(592 569)" x="-22.8" y="-19.8" text-anchor="middle" textLength="20.2" lengthAdjust="spacingAndGlyphs">SW12</text><text transform="translate(112 677)" x="-22.8" y="-19.8" text-anchor="middle" textLength="20.2" lengthAdjust="spacingAndGlyphs">SW13</text><text transform="translate(208 677)" x="-22.8" y="-19.8" text-anchor="middle" textLength="20.2" lengthAdjust="spacingAndGlyphs">SW14</text><text transform="translate(304 653)" x="-22.8" y="-19.8" text-anchor="middle" textLength="20.2" lengthAdjust="spacingAndGlyphs">SW15</text><text transform="translate(400 641)" x="-22.8" y="-19.8" text-anchor="middle" textLength="20.2" lengthAdjust="spacingAndGlyphs">SW16</text><text transform="translate(496 653)" x="-22.8" y="-19.8" text-anchor="middle" textLength="20.2" lengthAdjust="spacingAndGlyphs">SW17</text><text transform="translate(592 665)" x="-22.8" y="-19.8" text-anchor="middle" textLength="20.2" lengthAdjust="spacingAndGlyphs">SW18</text><text transform="translate(448 752)" x="-22.8" y="-19.8" text-anchor="middle" textLength="20.2" lengthAdjust="spacingAndGlyphs">SW19</text><text transform="translate(554.8 766) rotate(15)" x="-22.8" y="-19.8" text-anchor="middle" textLength="20.2" lengthAdjust="spacingAndGlyphs">SW20</text><text transform="translate(666.7 785.1) rotate(-60)" x="-22.8" y="-19.8" text-anchor="middle" textLength="20.2" lengthAdjust="spacingAndGlyphs">SW21</text><text transform="translate(1409 485)" x="-22.8" y="-19.8" text-anchor="middle" textLength="20.2" lengthAdjust="spacingAndGlyphs">SW22</text><text transform="translate(1313 485)" x="-22.8" y="-19.8" text-anchor="middle" textLength="20.2" lengthAdjust="spacingAndGlyphs">SW23</text><text transform="translate(1217 461)" x="-22.8" y="-19.8" text-anchor="middle" textLength="20.2" lengthAdjust="spacingAndGlyphs">SW24</text><text transform="translate(1121 449)" x="-22.8" y="-19.8" text-anchor="middle" textLength="20.2" lengthAdjust="spacingAndGlyphs">SW25</text><text transform="translate(1025 461)" x="-22.8" y="-19.8" text-anchor="middle" textLength="20.2" lengthAdjust="spacingAndGlyphs">SW26</text><text transform="translate(929 473)" x="-22.8" y="-19.8" text-anchor="middle" textLength="20.2" lengthAdjust="spacingAndGlyphs">SW27</text><text transform="translate(1409 581)" x="-22.8" y="-19.8" text-anchor="middle" textLength="20.2" lengthAdjust="spacingAndGlyphs">SW28</text><text transform="translate(1313 581)" x="-22.8" y="-19.8" text-anchor="middle" textLength="20.2" lengthAdjust="spacingAndGlyphs">SW29</text><text transform="translate(1217 557)" x="-22.8" y="-19.8" text-anchor="middle" textLength="20.2" lengthAdjust="spacingAndGlyphs">SW30</text><text transform="translate(1121 545)" x="-22.8" y="-19.8" text-anchor="middle" textLength="20.2" lengthAdjust="spacingAndGlyphs">SW31</text><text transform="translate(1025 557)" x="-22.8" y="-19.8" text-anchor="middle" textLength="20.2" lengthAdjust="spacingAndGlyphs">SW32</text><text transform="translate(929 569)" x="-22.8" y="-19.8" text-anchor="middle" textLength="20.2" lengthAdjust="spacingAndGlyphs">SW33</text><text transform="translate(1409 677)" x="-22.8" y="-19.8" text-anchor="middle" textLength="20.2" lengthAdjust="spacingAndGlyphs">SW34</text><text transform="translate(1313 677)" x="-22.8" y="-19.8" text-anchor="middle" textLength="20.2" lengthAdjust="spacingAndGlyphs">SW35</text><text transform="translate(1217 653)" x="-22.8" y="-19.8" text-anchor="middle" textLength="20.2" lengthAdjust="spacingAndGlyphs">SW36</text><text transform="translate(1121 641)" x="-22.8" y="-19.8" text-anchor="middle" textLength="20.2" lengthAdjust="spacingAndGlyphs">SW37</text><text transform="translate(1025 653)" x="-22.8" y="-19.8" text-anchor="middle" textLength="20.2" lengthAdjust="spacingAndGlyphs">SW38</text><text transform="translate(929 665)" x="-22.8" y="-19.8" text-anchor="middle" textLength="20.2" lengthAdjust="spacingAndGlyphs">SW39</text><text transform="translate(1072 752)" x="-22.8" y="-19.8" text-anchor="middle" textLength="20.2" lengthAdjust="spacingAndGlyphs">SW40</text><text transform="translate(966.2 766) rotate(-15)" x="-22.8" y="-19.8" text-anchor="middle" textLength="20.2" lengthAdjust="spacingAndGlyphs">SW41</text><text transform="translate(854.3 785.1) rotate(60)" x="-22.8" y="-19.8" text-anchor="middle" textLength="20.2" lengthAdjust="spacingAndGlyphs">SW42</text></g><g font-family="Liberation Sans,sans-serif" font-size="8.4" fill="#afafaf" stroke="#afafaf" stroke-width=".3"><text transform="translate(112 485)" x="0" y="46.2" text-anchor="middle" textLength="34.8" lengthAdjust="spacingAndGlyphs">SW_PUSH</text><text transform="translate(208 485)" x="0" y="46.2" text-anchor="middle" textLength="34.8" lengthAdjust="spacingAndGlyphs">SW_PUSH</text><text transform="translate(304 461)" x="0" y="46.2" text-anchor="middle" textLength="34.8" lengthAdjust="spacingAndGlyphs">SW_PUSH</text><text transform="translate(400 449)" x="0" y="46.2" text-anchor="middle" textLength="34.8" lengthAdjust="spacingAndGlyphs">SW_PUSH</text><text transform="translate(496 461)" x="0" y="46.2" text-anchor="middle" textLength="34.8" lengthAdjust="spacingAndGlyphs">SW_PUSH</text><text transform="translate(592 473)" x="0" y="46.2" text-anchor="middle" textLength="34.8" lengthAdjust="spacingAndGlyphs">SW_PUSH</text><text transform="translate(112 581)" x="0" y="46.2" text-anchor="middle" textLength="34.8" lengthAdjust="spacingAndGlyphs">SW_PUSH</text><text transform="translate(208 581)" x="0" y="46.2" text-anchor="middle" textLength="34.8" lengthAdjust="spacingAndGlyphs">SW_PUSH</text><text transform="translate(304 557)" x="0" y="46.2" text-anchor="middle" textLength="34.8" lengthAdjust="spacingAndGlyphs">SW_PUSH</text><text transform="translate(400 545)" x="0" y="46.2" text-anchor="middle" textLength="34.8" lengthAdjust="spacingAndGlyphs">SW_PUSH</text><text transform="translate(496 557)" x="0" y="46.2" text-anchor="middle" textLength="34.8" lengthAdjust="spacingAndGlyphs">SW_PUSH</text><text transform="translate(592 569)" x="0" y="46.2" text-anchor="middle" textLength="34.8" lengthAdjust="spacingAndGlyphs">SW_PUSH</text><text transform="translate(112 677)" x="0" y="46.2" text-anchor="middle" textLength="34.8" lengthAdjust="spacingAndGlyphs">SW_PUSH</text><text transform="translate(208 677)" x="0" y="46.2" text-anchor="middle" textLength="34.8" lengthAdjust="spacingAndGlyphs">SW_PUSH</text><text transform="translate(304 653)" x="0" y="46.2" text-anchor="middle" textLength="34.8" lengthAdjust="spacingAndGlyphs">SW_PUSH</text><text transform="translate(400 641)" x="0" y="46.2" text-anchor="middle" textLength="34.8" lengthAdjust="spacingAndGlyphs">SW_PUSH</text><text transform="translate(496 653)" x="0" y="46.2" text-anchor="middle" textLength="34.8" lengthAdjust="spacingAndGlyphs">SW_PUSH</text><text transform="translate(592 665)" x="0" y="46.2" text-anchor="middle" textLength="34.8" lengthAdjust="spacingAndGlyphs">SW_PUSH</text><text transform="translate(448 752)" x="0" y="46.2" text-anchor="middle" textLength="34.8" lengthAdjust="spacingAndGlyphs">SW_PUSH</text><text transform="translate(554.8 766) rotate(15)" x="0" y="46.2" text-anchor="middle" textLength="34.8" lengthAdjust="spacingAndGlyphs">SW_PUSH</text><text transform="translate(666.7 785.1) rotate(-60)" x="0" y="46.2" text-anchor="middle" textLength="34.8" lengthAdjust="spacingAndGlyphs">SW_PUSH</text><text transform="translate(1409 485)" x="0" y="46.2" text-anchor="middle" textLength="34.8" lengthAdjust="spacingAndGlyphs">SW_PUSH</text><text transform="translate(1313 485)" x="0" y="46.2" text-anchor="middle" textLength="34.8" lengthAdjust="spacingAndGlyphs">SW_PUSH</text><text transform="translate(1217 461)" x="0" y="46.2" text-anchor="middle" textLength="34.8" lengthAdjust="spacingAndGlyphs">SW_PUSH</text><text transform="translate(1121 449)" x="0" y="46.2" text-anchor="middle" textLength="34.8" lengthAdjust="spacingAndGlyphs">SW_PUSH</text><text transform="translate(1025 461)" x="0" y="46.2" text-anchor="middle" textLength="34.8" lengthAdjust="spacingAndGlyphs">SW_PUSH</text><text transform="translate(929 473)" x="0" y="46.2" text-anchor="middle" textLength="34.8" lengthAdjust="spacingAndGlyphs">SW_PUSH</text><text transform="translate(1409 581)" x="0" y="46.2" text-anchor="middle" textLength="34.8" lengthAdjust="spacingAndGlyphs">SW_PUSH</text><text transform="translate(1313 581)" x="0" y="46.2" text-anchor="middle" textLength="34.8" lengthAdjust="spacingAndGlyphs">SW_PUSH</text><text transform="translate(1217 557)" x="0" y="46.2" text-anchor="middle" textLength="34.8" lengthAdjust="spacingAndGlyphs">SW_PUSH</text><text transform="translate(1121 545)" x="0" y="46.2" text-anchor="middle" textLength="34.8" lengthAdjust="spacingAndGlyphs">SW_PUSH</text><text transform="translate(1025 557)" x="0" y="46.2" text-anchor="middle" textLength="34.8" lengthAdjust="spacingAndGlyphs">SW_PUSH</text><text transform="translate(929 569)" x="0" y="46.2" text-anchor="middle" textLength="34.8" lengthAdjust="spacingAndGlyphs">SW_PUSH</text><text transform="translate(1409 677)" x="0" y="46.2" text-anchor="middle" textLength="34.8" lengthAdjust="spacingAndGlyphs">SW_PUSH</text><text transform="translate(1313 677)" x="0" y="46.2" text-anchor="middle" textLength="34.8" lengthAdjust="spacingAndGlyphs">SW_PUSH</text><text transform="translate(1217 653)" x="0" y="46.2" text-anchor="middle" textLength="34.8" lengthAdjust="spacingAndGlyphs">SW_PUSH</text><text transform="translate(1121 641)" x="0" y="46.2" text-anchor="middle" textLength="34.8" lengthAdjust="spacingAndGlyphs">SW_PUSH</text><text transform="translate(1025 653)" x="0" y="46.2" text-anchor="middle" textLength="34.8" lengthAdjust="spacingAndGlyphs">SW_PUSH</text><text transform="translate(929 665)" x="0" y="46.2" text-anchor="middle" textLength="34.8" lengthAdjust="spacingAndGlyphs">SW_PUSH</text><text transform="translate(1072 752)" x="0" y="46.2" text-anchor="middle" textLength="34.8" lengthAdjust="spacingAndGlyphs">SW_PUSH</text><text transform="translate(966.2 766) rotate(-15)" x="0" y="46.2" text-anchor="middle" textLength="34.8" lengthAdjust="spacingAndGlyphs">SW_PUSH</text><text transform="translate(854.3 785.1) rotate(60)" x="0" y="46.2" text-anchor="middle" textLength="34.8" lengthAdjust="spacingAndGlyphs">SW_PUSH</text><text x="304.5" y="409.7" textLength="7" lengthAdjust="spacingAndGlyphs" text-anchor="middle">J5</text><text x="304.5" y="421.8" textLength="59.5" lengthAdjust="spacingAndGlyphs" text-anchor="middle">Breakaway_Tabs</text><text x="496.5" y="409.7" textLength="7" lengthAdjust="spacingAndGlyphs" text-anchor="middle">J5</text><text x="496.5" y="421.8" textLength="59.5" lengthAdjust="spacingAndGlyphs" text-anchor="middle">Breakaway_Tabs</text><text x="1024.5" y="409.7" textLength="7" lengthAdjust="spacingAndGlyphs" text-anchor="middle">J5</text><text x="1024.5" y="421.8" textLength="59.5" lengthAdjust="spacingAndGlyphs" text-anchor="middle">Breakaway_Tabs</text><text x="1216.5" y="409.7" textLength="7" lengthAdjust="spacingAndGlyphs" text-anchor="middle">J5</text><text x="1216.5" y="421.8" textLength="59.5" lengthAdjust="spacingAndGlyphs" text-anchor="middle">Breakaway_Tabs</text><text x="111.5" y="731.2" textLength="59.5" lengthAdjust="spacingAndGlyphs" text-anchor="middle">Breakaway_Tabs</text><text x="111.5" y="723" textLength="7" lengthAdjust="spacingAndGlyphs" text-anchor="middle">J5</text><text x="303.5" y="731.2" textLength="59.5" lengthAdjust="spacingAndGlyphs" text-anchor="middle">Breakaway_Tabs</text><text x="303.5" y="723" textLength="7" lengthAdjust="spacingAndGlyphs" text-anchor="middle">J5</text><text x="1217.5" y="731.2" textLength="59.5" lengthAdjust="spacingAndGlyphs" text-anchor="middle">Breakaway_Tabs</text><text x="1217.5" y="723" textLength="7" lengthAdjust="spacingAndGlyphs" text-anchor="middle">J5</text><text x="1409.5" y="731.2" textLength="59.5" lengthAdjust="spacingAndGlyphs" text-anchor="middle">Breakaway_Tabs</text><text x="1409.5" y="723" textLength="7" lengthAdjust="spacingAndGlyphs" text-anchor="middle">J5</text><text transform="translate(748.6 656.5) rotate(-90)" textLength="33.5" lengthAdjust="spacingAndGlyphs">SW_PUSH</text><text transform="translate(756 704) rotate(-90)" textLength="36" lengthAdjust="spacingAndGlyphs">SW_SPST</text><text transform="translate(716.5 697) rotate(-90)" textLength="14" lengthAdjust="spacingAndGlyphs">PSW</text><text transform="translate(674.6 705) rotate(-90)" textLength="46" lengthAdjust="spacingAndGlyphs">Conn_01x05</text><text transform="translate(775.5 656.5) rotate(-90)" textLength="33.5" lengthAdjust="spacingAndGlyphs">SW_PUSH</text><text transform="translate(771.5 704) rotate(-90)" textLength="36" lengthAdjust="spacingAndGlyphs">SW_SPST</text><text transform="translate(806.5 697) rotate(-90)" textLength="14" lengthAdjust="spacingAndGlyphs">PSW</text><text transform="translate(855.5 705) rotate(-90)" textLength="46" lengthAdjust="spacingAndGlyphs">Conn_01x05</text><text transform="translate(712.5 628) rotate(-90)" textLength="11" lengthAdjust="spacingAndGlyphs">JST</text><text transform="translate(673 628) rotate(-90)" textLength="16" lengthAdjust="spacingAndGlyphs">BATT</text><text transform="translate(851 628) rotate(-90)" textLength="11" lengthAdjust="spacingAndGlyphs">JST</text></g><g font-family="Liberation Sans,sans-serif" font-size="8.4" fill="#f2eda1" stroke="#f2eda1" stroke-width=".3"><text x="273" y="601.8" textLength="275" lengthAdjust="spacingAndGlyphs">Corne Ultralight v2.0 PCB Designed by foostan, made by petejohanson</text><text x="1090" y="601.8" textLength="164" lengthAdjust="spacingAndGlyphs">Corne Light v2.0 PCB Designed by foostan</text><text transform="translate(734.6 651) rotate(-90)" textLength="22" lengthAdjust="spacingAndGlyphs">RESET</text><text transform="translate(790.6 652) rotate(-90)" textLength="22" lengthAdjust="spacingAndGlyphs">RESET</text><text transform="translate(725.5 672.5) rotate(-90)" textLength="9" lengthAdjust="spacingAndGlyphs">ON</text><text transform="translate(725.5 710) rotate(-90)" textLength="13" lengthAdjust="spacingAndGlyphs">OFF</text><text transform="translate(800.5 672.5) rotate(-90)" textLength="9" lengthAdjust="spacingAndGlyphs">ON</text><text transform="translate(800.5 710) rotate(-90)" textLength="13" lengthAdjust="spacingAndGlyphs">OFF</text><text x="650" y="672.4" textLength="19.3" lengthAdjust="spacingAndGlyphs">Black</text><text x="851" y="667" textLength="25" lengthAdjust="spacingAndGlyphs">- Black</text><text x="851" y="674.2" textLength="19" lengthAdjust="spacingAndGlyphs">+ Red</text><text transform="translate(688.5 609) rotate(-90)" textLength="25" lengthAdjust="spacingAndGlyphs">- Black</text><text transform="translate(700.5 609) rotate(-90)" textLength="18" lengthAdjust="spacingAndGlyphs">+ Red</text><text transform="translate(827.5 610) rotate(-90)" textLength="18" lengthAdjust="spacingAndGlyphs">+ Red</text><text transform="translate(838 610) rotate(-90)" textLength="25" lengthAdjust="spacingAndGlyphs">- Black</text><text x="676" y="634" textLength="29" lengthAdjust="spacingAndGlyphs">nice!view</text><text x="812" y="634.5" textLength="29" lengthAdjust="spacingAndGlyphs">nice!view</text></g><g font-family="Liberation Sans,sans-serif" font-size="7.2" fill="#f2eda1" stroke="#f2eda1" stroke-width=".3"><text x="692.3" y="445" textLength="26" lengthAdjust="spacingAndGlyphs" text-anchor="middle">MicroUSB</text><text x="662" y="467.9" textLength="9.8" lengthAdjust="spacingAndGlyphs">RAW</text><text x="703.9" y="467.9" textLength="18.9" lengthAdjust="spacingAndGlyphs">D3/TX0</text><text x="662" y="480.7" textLength="9.8" lengthAdjust="spacingAndGlyphs">GND</text><text x="703.9" y="480.7" textLength="18.9" lengthAdjust="spacingAndGlyphs">D2/RX1</text><text x="662" y="493.5" textLength="9.8" lengthAdjust="spacingAndGlyphs">RST</text><text x="713.3" y="493.5" textLength="9.4" lengthAdjust="spacingAndGlyphs">GND</text><text x="662" y="506.3" textLength="9.8" lengthAdjust="spacingAndGlyphs">VCC</text><text x="713.3" y="506.3" textLength="9.4" lengthAdjust="spacingAndGlyphs">GND</text><text x="662" y="519.1" textLength="16.2" lengthAdjust="spacingAndGlyphs">A3/F4</text><text x="697.6" y="519.1" textLength="25.2" lengthAdjust="spacingAndGlyphs">SDA/D1/2</text><text x="662" y="532" textLength="16.2" lengthAdjust="spacingAndGlyphs">A2/F5</text><text x="697.6" y="532" textLength="25.2" lengthAdjust="spacingAndGlyphs">SCL/D0/3</text><text x="662" y="544.8" textLength="16.2" lengthAdjust="spacingAndGlyphs">A1/F6</text><text x="710.2" y="544.8" textLength="12.6" lengthAdjust="spacingAndGlyphs">D4/4</text><text x="662" y="557.6" textLength="16.2" lengthAdjust="spacingAndGlyphs">A0/F7</text><text x="710.2" y="557.6" textLength="12.6" lengthAdjust="spacingAndGlyphs">C6/5</text><text x="662" y="570.4" textLength="16.2" lengthAdjust="spacingAndGlyphs">15/B1</text><text x="710.2" y="570.4" textLength="12.6" lengthAdjust="spacingAndGlyphs">D7/6</text><text x="662" y="583.2" textLength="16.2" lengthAdjust="spacingAndGlyphs">14/B3</text><text x="710.2" y="583.2" textLength="12.6" lengthAdjust="spacingAndGlyphs">E6/7</text><text x="662" y="596" textLength="16.2" lengthAdjust="spacingAndGlyphs">16/B2</text><text x="710.2" y="596" textLength="12.6" lengthAdjust="spacingAndGlyphs">B4/8</text><text x="662" y="608.8" textLength="16.2" lengthAdjust="spacingAndGlyphs">10/B6</text><text x="710.2" y="608.8" textLength="12.6" lengthAdjust="spacingAndGlyphs">B5/9</text><text x="829.5" y="445" textLength="26" lengthAdjust="spacingAndGlyphs" text-anchor="middle">MicroUSB</text><text x="799" y="467.9" textLength="9.8" lengthAdjust="spacingAndGlyphs">RAW</text><text x="841.2" y="467.9" textLength="18.9" lengthAdjust="spacingAndGlyphs">D3/TX0</text><text x="799" y="480.7" textLength="9.8" lengthAdjust="spacingAndGlyphs">GND</text><text x="841.2" y="480.7" textLength="18.9" lengthAdjust="spacingAndGlyphs">D2/RX1</text><text x="799" y="493.5" textLength="9.8" lengthAdjust="spacingAndGlyphs">RST</text><text x="850.6" y="493.5" textLength="9.4" lengthAdjust="spacingAndGlyphs">GND</text><text x="799" y="506.3" textLength="9.8" lengthAdjust="spacingAndGlyphs">VCC</text><text x="850.6" y="506.3" textLength="9.4" lengthAdjust="spacingAndGlyphs">GND</text><text x="799" y="519.1" textLength="16.2" lengthAdjust="spacingAndGlyphs">A3/F4</text><text x="834.9" y="519.1" textLength="25.2" lengthAdjust="spacingAndGlyphs">SDA/D1/2</text><text x="799" y="532" textLength="16.2" lengthAdjust="spacingAndGlyphs">A2/F5</text><text x="834.9" y="532" textLength="25.2" lengthAdjust="spacingAndGlyphs">SCL/D0/3</text><text x="799" y="544.8" textLength="16.2" lengthAdjust="spacingAndGlyphs">A1/F6</text><text x="847.5" y="544.8" textLength="12.6" lengthAdjust="spacingAndGlyphs">D4/4</text><text x="799" y="557.6" textLength="16.2" lengthAdjust="spacingAndGlyphs">A0/F7</text><text x="847.5" y="557.6" textLength="12.6" lengthAdjust="spacingAndGlyphs">C6/5</text><text x="799" y="570.4" textLength="16.2" lengthAdjust="spacingAndGlyphs">15/B1</text><text x="847.5" y="570.4" textLength="12.6" lengthAdjust="spacingAndGlyphs">D7/6</text><text x="799" y="583.2" textLength="16.2" lengthAdjust="spacingAndGlyphs">14/B3</text><text x="847.5" y="583.2" textLength="12.6" lengthAdjust="spacingAndGlyphs">E6/7</text><text x="799" y="596" textLength="16.2" lengthAdjust="spacingAndGlyphs">16/B2</text><text x="847.5" y="596" textLength="12.6" lengthAdjust="spacingAndGlyphs">B4/8</text><text x="799" y="608.8" textLength="16.2" lengthAdjust="spacingAndGlyphs">10/B6</text><text x="847.5" y="608.8" textLength="12.6" lengthAdjust="spacingAndGlyphs">B5/9</text></g><g font-family="Liberation Sans,sans-serif" font-size="6.8" fill="#585d84"><text transform="translate(644.8 457) scale(-1 1)" textLength="12" lengthAdjust="spacingAndGlyphs">TP1</text><text transform="translate(644.8 479.5) scale(-1 1)" textLength="12" lengthAdjust="spacingAndGlyphs">TP2</text><text transform="translate(644.8 502) scale(-1 1)" textLength="12" lengthAdjust="spacingAndGlyphs">TP3</text><text transform="translate(889.7 462) scale(-1 1)" textLength="12" lengthAdjust="spacingAndGlyphs">TP4</text><text transform="translate(889.7 484.5) scale(-1 1)" textLength="12" lengthAdjust="spacingAndGlyphs">TP5</text><text transform="translate(889.7 507) scale(-1 1)" textLength="12" lengthAdjust="spacingAndGlyphs">TP6</text></g><g font-family="Liberation Sans,sans-serif" font-size="6.8" fill="#e8b2a7" opacity=".9"><text transform="translate(645.1 473.7) scale(-1 1)" textLength="13.2" lengthAdjust="spacingAndGlyphs">RGB</text><text transform="translate(645.1 496.5) scale(-1 1)" textLength="13.2" lengthAdjust="spacingAndGlyphs">GND</text><text transform="translate(645.1 519.2) scale(-1 1)" textLength="13.2" lengthAdjust="spacingAndGlyphs">VCC</text><text transform="translate(890 478.7) scale(-1 1)" textLength="13.2" lengthAdjust="spacingAndGlyphs">RGB</text><text transform="translate(890 501.5) scale(-1 1)" textLength="13.2" lengthAdjust="spacingAndGlyphs">GND</text><text transform="translate(890 524.2) scale(-1 1)" textLength="13.2" lengthAdjust="spacingAndGlyphs">VCC</text></g><text x="306.2" y="719.5" font-family="Liberation Sans,sans-serif" font-size="21.5" font-weight="bold" fill="#e8b2a7" text-anchor="middle" textLength="55" lengthAdjust="spacingAndGlyphs" opacity=".75">corne</text><text x="303.7" y="719.2" font-family="Liberation Sans,sans-serif" font-size="21.5" font-weight="bold" fill="#f2eda1" stroke="#f2eda1" stroke-width=".9" stroke-linejoin="round" text-anchor="middle" textLength="57" lengthAdjust="spacingAndGlyphs">corne</text><text x="1219.8" y="719.5" font-family="Liberation Sans,sans-serif" font-size="21.5" font-weight="bold" fill="#e8b2a7" text-anchor="middle" textLength="55" lengthAdjust="spacingAndGlyphs" opacity=".75">corne</text><text x="1217.3" y="719.2" font-family="Liberation Sans,sans-serif" font-size="21.5" font-weight="bold" fill="#f2eda1" stroke="#f2eda1" stroke-width=".9" stroke-linejoin="round" text-anchor="middle" textLength="57" lengthAdjust="spacingAndGlyphs">corne</text>
<path d="M36 252.5 H1486" stroke="#949494" stroke-width="1"/><path d="M674.5 123 V167.5 M634 128.5 H714" stroke="#9a9a9a" stroke-width="1"/>
<rect x="36" y="123" width="1450" height="1" fill="#a0a0a0" opacity=".35"/>
</svg>
</body></html>
